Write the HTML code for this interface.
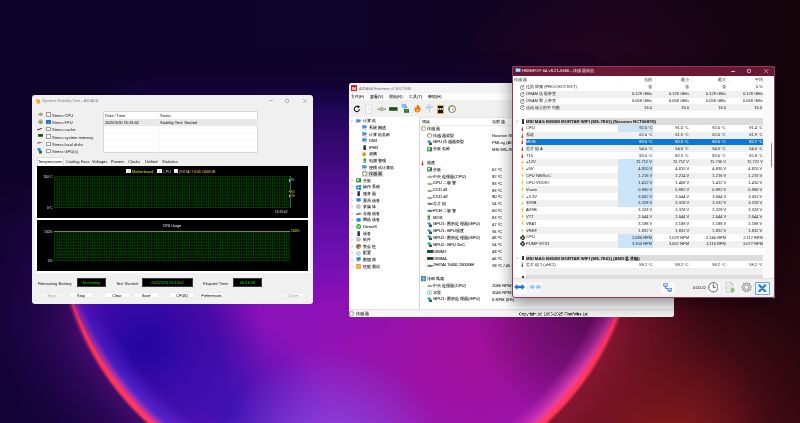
<!DOCTYPE html>
<html><head><meta charset="utf-8"><style>
*{box-sizing:border-box;margin:0;padding:0}
html,body{width:800px;height:423px;overflow:hidden;background:#0c0326}
body{position:relative;font-family:"Liberation Sans",sans-serif;color:#222}
.abs{position:absolute}
.t{position:absolute;white-space:nowrap;line-height:1;transform:scale(.25);-webkit-text-stroke-width:0.3px}
.tc{position:absolute;width:0;height:0}
.tb{position:absolute;left:0;top:0;white-space:nowrap;text-align:center;transform:scale(.25);transform-origin:0 0;-webkit-text-stroke-width:0.3px}
#bg{position:absolute;left:0;top:0}
.win{position:absolute;background:#f0f0f0;border-radius:3px;overflow:hidden;will-change:transform}
.grid{background-color:#000;background-image:repeating-linear-gradient(90deg,rgba(0,78,0,.62) 0 0.85px,transparent 0.85px 2.36px),repeating-linear-gradient(180deg,rgba(0,78,0,.62) 0 0.9px,transparent 0.9px 3.08px)}
.cb{position:absolute;width:4.4px;height:4.4px;background:#fff;border-radius:0.5px}
.gbox{position:absolute;background:#000;border:0.5px solid #3a3a3a}
.btn{position:absolute;height:6.7px;background:#fdfdfd;border:0.4px solid #ebebeb;border-radius:0.8px}
#w1 .t,#w1 .tb{-webkit-text-stroke-width:0.1px}
#w3 .t{-webkit-text-stroke-width:0.12px}
</style></head><body>
<svg id="bg" width="800" height="423" viewBox="0 0 800 423">
<defs>
 <linearGradient id="base" x1="0" y1="0" x2="800" y2="0" gradientUnits="userSpaceOnUse">
  <stop offset="0" stop-color="#0d0328"/>
  <stop offset="0.45" stop-color="#0e0328"/>
  <stop offset="0.72" stop-color="#10031c"/>
  <stop offset="1" stop-color="#16040a"/>
 </linearGradient>
 <radialGradient id="topred" cx="600" cy="100" r="150" gradientUnits="userSpaceOnUse">
  <stop offset="0" stop-color="#380622" stop-opacity="0.6"/>
  <stop offset="1" stop-color="#380622" stop-opacity="0"/>
 </radialGradient>
 <radialGradient id="redglow" cx="630" cy="470" r="320" gradientUnits="userSpaceOnUse">
  <stop offset="0" stop-color="#7a1820" stop-opacity="1"/>
  <stop offset="0.45" stop-color="#500c16" stop-opacity="0.8"/>
  <stop offset="1" stop-color="#20050c" stop-opacity="0"/>
 </radialGradient>
 <radialGradient id="outglowL" cx="347" cy="207" r="480" gradientUnits="userSpaceOnUse">
  <stop offset="0.6" stop-color="#4a0c72" stop-opacity="1"/>
  <stop offset="0.66" stop-color="#2e085c" stop-opacity="0.9"/>
  <stop offset="0.78" stop-color="#1a0446" stop-opacity="0.55"/>
  <stop offset="1" stop-color="#120336" stop-opacity="0"/>
 </radialGradient>
 <radialGradient id="outglowR" cx="347" cy="207" r="400" gradientUnits="userSpaceOnUse">
  <stop offset="0.73" stop-color="#901838" stop-opacity="0.85"/>
  <stop offset="0.85" stop-color="#701226" stop-opacity="0.5"/>
  <stop offset="1" stop-color="#400810" stop-opacity="0"/>
 </radialGradient>
 <linearGradient id="vfade" x1="0" y1="0" x2="0" y2="423" gradientUnits="userSpaceOnUse">
  <stop offset="0.62" stop-color="#fff" stop-opacity="0"/>
  <stop offset="0.9" stop-color="#fff" stop-opacity="1"/>
 </linearGradient>
 <linearGradient id="hL" x1="0" y1="0" x2="800" y2="0" gradientUnits="userSpaceOnUse">
  <stop offset="0.3" stop-color="#fff" stop-opacity="1"/>
  <stop offset="0.5" stop-color="#fff" stop-opacity="0"/>
 </linearGradient>
 <linearGradient id="hR" x1="0" y1="0" x2="800" y2="0" gradientUnits="userSpaceOnUse">
  <stop offset="0.5" stop-color="#fff" stop-opacity="0"/>
  <stop offset="0.7" stop-color="#fff" stop-opacity="1"/>
 </linearGradient>
 <linearGradient id="vfade2" x1="0" y1="0" x2="0" y2="423" gradientUnits="userSpaceOnUse">
  <stop offset="0.4" stop-color="#fff" stop-opacity="0"/>
  <stop offset="0.8" stop-color="#fff" stop-opacity="1"/>
 </linearGradient>
 <linearGradient id="vfade3" x1="0" y1="0" x2="0" y2="423" gradientUnits="userSpaceOnUse">
  <stop offset="0.12" stop-color="#fff" stop-opacity="0"/>
  <stop offset="0.26" stop-color="#fff" stop-opacity="1"/>
 </linearGradient>
 <mask id="vmask3"><rect width="800" height="423" fill="url(#vfade3)"/></mask>
 <mask id="vmask2"><rect width="800" height="423" fill="url(#vfade2)"/></mask>
 <mask id="vmask"><rect width="800" height="423" fill="url(#vfade)"/></mask>
 <mask id="mL"><rect width="800" height="423" fill="url(#hL)"/></mask>
 <mask id="mR"><rect width="800" height="423" fill="url(#hR)"/></mask>
 <linearGradient id="inner" x1="0" y1="0" x2="0" y2="423" gradientUnits="userSpaceOnUse">
  <stop offset="0" stop-color="#0d0328"/>
  <stop offset="0.17" stop-color="#0f0332"/>
  <stop offset="0.24" stop-color="#1a0652"/>
  <stop offset="0.36" stop-color="#3a0875"/>
  <stop offset="0.48" stop-color="#560a9c"/>
  <stop offset="0.6" stop-color="#6e10b0"/>
  <stop offset="0.72" stop-color="#8a10b8"/>
  <stop offset="1" stop-color="#9218b8"/>
 </linearGradient>
 <radialGradient id="innerblue" cx="145" cy="345" r="120" gradientUnits="userSpaceOnUse">
  <stop offset="0" stop-color="#2006a0" stop-opacity="1"/>
  <stop offset="0.6" stop-color="#2a08a0" stop-opacity="0.7"/>
  <stop offset="1" stop-color="#2a08a0" stop-opacity="0"/>
 </radialGradient>
 <radialGradient id="innerblue2" cx="235" cy="415" r="95" gradientUnits="userSpaceOnUse">
  <stop offset="0" stop-color="#3010b0" stop-opacity="0.9"/>
  <stop offset="1" stop-color="#3010b0" stop-opacity="0"/>
 </radialGradient>
 <radialGradient id="innermag" cx="480" cy="350" r="170" gradientUnits="userSpaceOnUse">
  <stop offset="0" stop-color="#a4109a" stop-opacity="1"/>
  <stop offset="1" stop-color="#a4109a" stop-opacity="0"/>
 </radialGradient>
 <radialGradient id="innerlav" cx="330" cy="470" r="120" gradientUnits="userSpaceOnUse">
  <stop offset="0" stop-color="#8450e8" stop-opacity="1"/>
  <stop offset="1" stop-color="#8450e8" stop-opacity="0"/>
 </radialGradient>
 <radialGradient id="rimband" cx="347" cy="207" r="320" gradientUnits="userSpaceOnUse">
  <stop offset="0.88" stop-color="#ff3a90" stop-opacity="0"/>
  <stop offset="0.908" stop-color="#ff3a70" stop-opacity="0.9"/>
  <stop offset="0.915" stop-color="#ff3a60" stop-opacity="0.9"/>
  <stop offset="0.925" stop-color="#ff3a60" stop-opacity="0"/>
 </radialGradient>
 <radialGradient id="rimbandB" cx="347" cy="207" r="320" gradientUnits="userSpaceOnUse">
  <stop offset="0.82" stop-color="#6a30f0" stop-opacity="0"/>
  <stop offset="0.89" stop-color="#6a3ef0" stop-opacity="0.55"/>
  <stop offset="0.905" stop-color="#c040c0" stop-opacity="0.55"/>
  <stop offset="0.915" stop-color="#c040c0" stop-opacity="0"/>
 </radialGradient>
 <radialGradient id="rimbandP" cx="347" cy="207" r="320" gradientUnits="userSpaceOnUse">
  <stop offset="0.84" stop-color="#e040c0" stop-opacity="0"/>
  <stop offset="0.895" stop-color="#e848b8" stop-opacity="0.85"/>
  <stop offset="0.912" stop-color="#ff4090" stop-opacity="0.8"/>
  <stop offset="0.92" stop-color="#ff4090" stop-opacity="0"/>
 </radialGradient>
 <radialGradient id="darkmag" cx="590" cy="315" r="115" gradientUnits="userSpaceOnUse">
  <stop offset="0" stop-color="#4a0838" stop-opacity="0.75"/>
  <stop offset="0.55" stop-color="#4a0838" stop-opacity="0.4"/>
  <stop offset="1" stop-color="#4a0838" stop-opacity="0"/>
 </radialGradient>
 <radialGradient id="redglow2" cx="650" cy="440" r="120" gradientUnits="userSpaceOnUse">
  <stop offset="0" stop-color="#a02020" stop-opacity="0.7"/>
  <stop offset="1" stop-color="#a02020" stop-opacity="0"/>
 </radialGradient>
 <radialGradient id="tlfix" cx="60" cy="70" r="95" gradientUnits="userSpaceOnUse">
  <stop offset="0.45" stop-color="#0d0328" stop-opacity="1"/>
  <stop offset="1" stop-color="#0d0328" stop-opacity="0"/>
 </radialGradient>
 <clipPath id="cc"><circle cx="347" cy="207" r="292"/></clipPath>
 <linearGradient id="rimfade" x1="0" y1="0" x2="0" y2="423" gradientUnits="userSpaceOnUse">
  <stop offset="0.64" stop-color="#ff3058" stop-opacity="0"/>
  <stop offset="0.8" stop-color="#ff3058" stop-opacity="1"/>
  <stop offset="1" stop-color="#ff3a5a" stop-opacity="1"/>
 </linearGradient>
</defs>
<rect width="800" height="423" fill="url(#base)"/>
<rect width="800" height="423" fill="url(#topred)"/>
<rect width="800" height="423" fill="url(#redglow)"/>
<rect width="800" height="423" fill="url(#redglow2)"/>
<g mask="url(#vmask2)">
 <rect width="800" height="423" fill="url(#outglowL)" mask="url(#mL)"/>
 <rect width="800" height="423" fill="url(#outglowR)" mask="url(#mR)"/>
</g>
<g clip-path="url(#cc)" mask="url(#vmask3)">
 <rect width="800" height="423" fill="url(#inner)"/>
 <rect width="800" height="423" fill="url(#innerblue)"/>
 <rect width="800" height="423" fill="url(#innerblue2)"/>
 <rect width="800" height="423" fill="url(#innermag)"/>
 <rect width="800" height="423" fill="url(#innerlav)"/>
 <rect width="800" height="423" fill="url(#darkmag)"/>
 <rect x="0" y="0" width="250" height="200" fill="url(#tlfix)"/>
 <g mask="url(#vmask)"><rect width="800" height="423" fill="url(#rimbandB)" mask="url(#mL)"/><rect width="800" height="423" fill="url(#rimbandP)" mask="url(#mR)"/></g>
</g>
<rect width="800" height="423" fill="url(#rimband)" mask="url(#vmask)"/>
<circle cx="347" cy="207" r="291" fill="none" stroke="url(#rimfade)" stroke-width="3"/>
</svg>
<div class="win" id="w1" style="left:32px;top:95px;width:281px;height:209px;background:#f0f0f0">
<svg class="abs" style="left:3.5px;top:3px" width="5" height="6" viewBox="0 0 5 6"><path d="M0.6 0.3 L1.6 2 L2.4 1 Q4.6 2.6 4.2 4.4 Q3.6 5.8 2.2 5.8 Q0.4 5.6 0.5 3.8 Z" fill="#f39a1e"/><path d="M1.4 3.6 Q2.6 3 3.4 4.2 Q3.2 5.3 2.2 5.3 Q1.2 5.2 1.4 3.6Z" fill="#ffd24a"/></svg>
<div class="t" style="top:4.27px;font-size:16.60px;color:#8c8c8c;left:10.00px;transform-origin:0 0;">System Stability Test - AIDA64</div>
<div class="abs" style="left:237.40px;top:5.30px;width:4.00px;height:0.50px;background:#b4b4b4;"></div>
<div class="abs" style="left:253.4px;top:3.5px;width:4px;height:4px;border:0.6px solid #a8a8a8;border-radius:1.3px"></div>
<svg class="abs" style="left:270.5px;top:3.5px" width="4.2" height="4.2" viewBox="0 0 4 4"><path d="M0 0L4 4M4 0L0 4" stroke="#909090" stroke-width="0.55"/></svg>
<svg class="abs" style="left:5.6px;top:17.20px" width="5.5" height="4" viewBox="0 0 11 8"><path d="M0 4 L5.5 1 L11 4 L5.5 7Z" fill="#9aaa80"/><path d="M0 4 L5.5 7 L11 4 L11 5 L5.5 8 L0 5Z" fill="#5d7a3a"/></svg>
<div class="abs" style="left:14.4px;top:17.45px;width:4.5px;height:4.5px;background:#fcfcfc;border:0.5px solid #9a9a9a;border-radius:0.6px"></div>
<div class="t" style="top:17.72px;font-size:16.20px;color:#303030;left:20.30px;transform-origin:0 0;">Stress CPU</div>
<svg class="abs" style="left:5.6px;top:24.40px" width="5.5" height="5" viewBox="0 0 11 10"><path d="M0 3 L5.5 0 L11 3 L5.5 6Z" fill="#b8c0a8"/><path d="M0 6 L5.5 3 L11 6 L5.5 9Z" fill="#8aa070"/><path d="M0 6 L5.5 9 L11 6 L11 7 L5.5 10 L0 7Z" fill="#506a30"/></svg>
<div class="abs" style="left:14.4px;top:24.65px;width:4.5px;height:4.5px;background:#1a6fd0;border-radius:0.6px"></div>
<svg class="abs" style="left:15.2px;top:25.50px" width="3" height="3" viewBox="0 0 6 6"><path d="M0.8 3 L2.4 4.6 L5.2 1.2" stroke="#fff" stroke-width="0.9" fill="none"/></svg>
<div class="t" style="top:24.92px;font-size:16.20px;color:#303030;left:20.30px;transform-origin:0 0;">Stress FPU</div>
<svg class="abs" style="left:5.4px;top:31.70px" width="5.5" height="4" viewBox="0 0 11 8"><path d="M0 5 L8 2 L11 3 L3 6Z" fill="#333"/><path d="M0 5 L3 6 L3 7 L0 6Z" fill="#111"/></svg>
<div class="abs" style="left:14.4px;top:31.95px;width:4.5px;height:4.5px;background:#fcfcfc;border:0.5px solid #9a9a9a;border-radius:0.6px"></div>
<div class="t" style="top:32.22px;font-size:16.20px;color:#303030;left:20.30px;transform-origin:0 0;">Stress cache</div>
<svg class="abs" style="left:5.6px;top:39.10px" width="5.5" height="3.4" viewBox="0 0 11 7"><rect x="0" y="0" width="11" height="6" fill="#2e6a2e"/><rect x="1" y="1" width="9" height="3" fill="#1a4a1a"/><rect x="0" y="6" width="11" height="1" fill="#c8a030"/></svg>
<div class="abs" style="left:14.4px;top:39.35px;width:4.5px;height:4.5px;background:#fcfcfc;border:0.5px solid #9a9a9a;border-radius:0.6px"></div>
<div class="t" style="top:39.62px;font-size:16.20px;color:#303030;left:20.30px;transform-origin:0 0;">Stress system memory</div>
<svg class="abs" style="left:5.4px;top:46.30px" width="5.5" height="3" viewBox="0 0 11 6"><path d="M0 3 L9 2 L11 3 L2 5Z" fill="#555"/><rect x="1" y="4" width="3" height="1" fill="#888"/></svg>
<div class="abs" style="left:14.4px;top:46.55px;width:4.5px;height:4.5px;background:#fcfcfc;border:0.5px solid #9a9a9a;border-radius:0.6px"></div>
<div class="t" style="top:46.82px;font-size:16.20px;color:#303030;left:20.30px;transform-origin:0 0;">Stress local disks</div>
<svg class="abs" style="left:5.4px;top:53.40px" width="5" height="5.5" viewBox="0 0 10 11"><path d="M0 1 L6 0 L9 5 L3 7Z" fill="#2a8ae0"/><rect x="4" y="6" width="6" height="5" fill="#2e6a2e"/></svg>
<div class="abs" style="left:14.4px;top:53.65px;width:4.5px;height:4.5px;background:#fcfcfc;border:0.5px solid #9a9a9a;border-radius:0.6px"></div>
<div class="t" style="top:53.92px;font-size:16.20px;color:#303030;left:20.30px;transform-origin:0 0;">Stress GPU(s)</div>
<div class="abs" style="left:71.40px;top:16.40px;width:155.00px;height:42.00px;background:#fff;border:0.6px solid #d6d6d6"></div>
<div class="abs" style="left:72.20px;top:24.40px;width:153.40px;height:6.60px;background:#e8e8e8;"></div>
<div class="abs" style="left:126.40px;top:17.20px;width:0.50px;height:40.40px;background:#f2f2f2;"></div>
<div class="abs" style="left:72.20px;top:37.60px;width:153.40px;height:0.50px;background:#f7f7f7;"></div>
<div class="abs" style="left:72.20px;top:44.40px;width:153.40px;height:0.50px;background:#f7f7f7;"></div>
<div class="abs" style="left:72.20px;top:51.00px;width:153.40px;height:0.50px;background:#f7f7f7;"></div>
<div class="t" style="top:18.66px;font-size:15.80px;color:#333;left:73.00px;transform-origin:0 0;">Date / Time</div>
<div class="t" style="top:18.66px;font-size:15.80px;color:#333;left:127.60px;transform-origin:0 0;">Status</div>
<div class="t" style="top:26.06px;font-size:15.80px;color:#222;left:73.00px;transform-origin:0 0;">2025/3/20 15:33:02</div>
<div class="t" style="top:26.06px;font-size:15.80px;color:#222;left:127.60px;transform-origin:0 0;">Stability Test: Started</div>
<div class="abs" style="left:4.60px;top:62.40px;width:27.40px;height:8.40px;background:#fff;border:0.5px solid #dcdcdc;border-bottom:none"></div>
<div class="t" style="top:64.94px;font-size:16.00px;color:#262626;left:5.75px;transform-origin:0 0;">Temperatures</div>
<div class="t" style="top:64.94px;font-size:16.00px;color:#262626;left:33.60px;transform-origin:0 0;">Cooling Fans</div>
<div class="t" style="top:64.94px;font-size:16.00px;color:#262626;left:60.10px;transform-origin:0 0;">Voltages</div>
<div class="t" style="top:64.94px;font-size:16.00px;color:#262626;left:79.00px;transform-origin:0 0;">Powers</div>
<div class="t" style="top:64.94px;font-size:16.00px;color:#262626;left:96.00px;transform-origin:0 0;">Clocks</div>
<div class="t" style="top:64.94px;font-size:16.00px;color:#262626;left:113.00px;transform-origin:0 0;">Unified</div>
<div class="t" style="top:64.94px;font-size:16.00px;color:#262626;left:130.00px;transform-origin:0 0;">Statistics</div>
<div class="abs" style="left:3.40px;top:70.60px;width:274.40px;height:107.40px;background:#fff;"></div>
<div class="abs" style="left:4.9px;top:71px;width:271px;height:52px;background:#000">
<svg class="abs" style="left:17.6px;top:10.3px" width="235.7" height="32" viewBox="0 0 235.7 32"><path d="M0.50 0V32.00 M2.87 0V32.00 M5.24 0V32.00 M7.61 0V32.00 M9.98 0V32.00 M12.35 0V32.00 M14.72 0V32.00 M17.09 0V32.00 M19.46 0V32.00 M21.83 0V32.00 M24.20 0V32.00 M26.57 0V32.00 M28.94 0V32.00 M31.31 0V32.00 M33.68 0V32.00 M36.05 0V32.00 M38.42 0V32.00 M40.79 0V32.00 M43.16 0V32.00 M45.53 0V32.00 M47.90 0V32.00 M50.27 0V32.00 M52.64 0V32.00 M55.01 0V32.00 M57.38 0V32.00 M59.75 0V32.00 M62.12 0V32.00 M64.49 0V32.00 M66.86 0V32.00 M69.23 0V32.00 M71.60 0V32.00 M73.97 0V32.00 M76.34 0V32.00 M78.71 0V32.00 M81.08 0V32.00 M83.45 0V32.00 M85.82 0V32.00 M88.19 0V32.00 M90.56 0V32.00 M92.93 0V32.00 M95.30 0V32.00 M97.67 0V32.00 M100.04 0V32.00 M102.41 0V32.00 M104.78 0V32.00 M107.15 0V32.00 M109.52 0V32.00 M111.89 0V32.00 M114.26 0V32.00 M116.63 0V32.00 M119.00 0V32.00 M121.37 0V32.00 M123.74 0V32.00 M126.11 0V32.00 M128.48 0V32.00 M130.85 0V32.00 M133.22 0V32.00 M135.59 0V32.00 M137.96 0V32.00 M140.33 0V32.00 M142.70 0V32.00 M145.07 0V32.00 M147.44 0V32.00 M149.81 0V32.00 M152.18 0V32.00 M154.55 0V32.00 M156.92 0V32.00 M159.29 0V32.00 M161.66 0V32.00 M164.03 0V32.00 M166.40 0V32.00 M168.77 0V32.00 M171.14 0V32.00 M173.51 0V32.00 M175.88 0V32.00 M178.25 0V32.00 M180.62 0V32.00 M182.99 0V32.00 M185.36 0V32.00 M187.73 0V32.00 M190.10 0V32.00 M192.47 0V32.00 M194.84 0V32.00 M197.21 0V32.00 M199.58 0V32.00 M201.95 0V32.00 M204.32 0V32.00 M206.69 0V32.00 M209.06 0V32.00 M211.43 0V32.00 M213.80 0V32.00 M216.17 0V32.00 M218.54 0V32.00 M220.91 0V32.00 M223.28 0V32.00 M225.65 0V32.00 M228.02 0V32.00 M230.39 0V32.00 M232.76 0V32.00 M235.13 0V32.00 M0 31.50H235.70 M0 28.42H235.70 M0 25.34H235.70 M0 22.26H235.70 M0 19.18H235.70 M0 16.10H235.70 M0 13.02H235.70 M0 9.94H235.70 M0 6.86H235.70 M0 3.78H235.70 M0 0.70H235.70" stroke="#004200" stroke-width="0.85" fill="none"/></svg>
<div class="cb" style="left:89.6px;top:3px"></div>
<svg class="abs" style="left:90.3px;top:3.8px" width="3" height="3" viewBox="0 0 6 6"><path d="M0.8 3 L2.4 4.6 L5.2 1.2" stroke="#444" stroke-width="0.9" fill="none"/></svg>
<div class="t" style="top:3.56px;font-size:15.00px;color:#d4d40c;left:95.10px;transform-origin:0 0;">Motherboard</div>
<div class="cb" style="left:120.6px;top:3px"></div>
<svg class="abs" style="left:121.3px;top:3.8px" width="3" height="3" viewBox="0 0 6 6"><path d="M0.8 3 L2.4 4.6 L5.2 1.2" stroke="#444" stroke-width="0.9" fill="none"/></svg>
<div class="t" style="top:3.56px;font-size:15.00px;color:#9cb6dc;left:126.10px;transform-origin:0 0;">CPU</div>
<div class="cb" style="left:137.1px;top:3px"></div>
<svg class="abs" style="left:137.79999999999998px;top:3.8px" width="3" height="3" viewBox="0 0 6 6"><path d="M0.8 3 L2.4 4.6 L5.2 1.2" stroke="#444" stroke-width="0.9" fill="none"/></svg>
<div class="t" style="top:3.56px;font-size:15.00px;color:#d8a860;left:142.10px;transform-origin:0 0;">ZHITAI Ti600 2000GB</div>
<div class="t" style="top:9.33px;font-size:13.60px;color:#d0d0d0;right:255.40px;transform-origin:100% 0;">100°C</div>
<div class="t" style="top:40.33px;font-size:13.60px;color:#d0d0d0;right:255.40px;transform-origin:100% 0;">0°C</div>
<div class="t" style="top:11.93px;font-size:12.80px;color:#9cb6dc;left:254.30px;transform-origin:0 0;">92</div>
<div class="t" style="top:23.93px;font-size:12.80px;color:#d4d40c;left:254.30px;transform-origin:0 0;">53</div>
<div class="t" style="top:28.43px;font-size:12.80px;color:#d8a860;left:254.30px;transform-origin:0 0;">39</div>
<div class="abs" style="left:252.70px;top:10.30px;width:0.60px;height:32.00px;background:#4a5a4a;"></div>
<div class="abs" style="left:252.40px;top:13.20px;width:0.70px;height:3.00px;background:#9cb6dc;"></div>
<div class="abs" style="left:252.40px;top:24.60px;width:0.70px;height:1.60px;background:#d4d40c;"></div>
<div class="abs" style="left:252.40px;top:29.20px;width:0.70px;height:1.40px;background:#d8a860;"></div>
<div class="t" style="top:44.43px;font-size:12.80px;color:#d0d0d0;left:238.10px;transform-origin:0 0;">15:33:02</div>
</div>
<div class="abs" style="left:4.8px;top:125.4px;width:271.7px;height:50.3px;background:#000">
<svg class="abs" style="left:17.6px;top:10.5px" width="236" height="30.2" viewBox="0 0 236 30.2"><path d="M0.50 0V30.20 M2.87 0V30.20 M5.24 0V30.20 M7.61 0V30.20 M9.98 0V30.20 M12.35 0V30.20 M14.72 0V30.20 M17.09 0V30.20 M19.46 0V30.20 M21.83 0V30.20 M24.20 0V30.20 M26.57 0V30.20 M28.94 0V30.20 M31.31 0V30.20 M33.68 0V30.20 M36.05 0V30.20 M38.42 0V30.20 M40.79 0V30.20 M43.16 0V30.20 M45.53 0V30.20 M47.90 0V30.20 M50.27 0V30.20 M52.64 0V30.20 M55.01 0V30.20 M57.38 0V30.20 M59.75 0V30.20 M62.12 0V30.20 M64.49 0V30.20 M66.86 0V30.20 M69.23 0V30.20 M71.60 0V30.20 M73.97 0V30.20 M76.34 0V30.20 M78.71 0V30.20 M81.08 0V30.20 M83.45 0V30.20 M85.82 0V30.20 M88.19 0V30.20 M90.56 0V30.20 M92.93 0V30.20 M95.30 0V30.20 M97.67 0V30.20 M100.04 0V30.20 M102.41 0V30.20 M104.78 0V30.20 M107.15 0V30.20 M109.52 0V30.20 M111.89 0V30.20 M114.26 0V30.20 M116.63 0V30.20 M119.00 0V30.20 M121.37 0V30.20 M123.74 0V30.20 M126.11 0V30.20 M128.48 0V30.20 M130.85 0V30.20 M133.22 0V30.20 M135.59 0V30.20 M137.96 0V30.20 M140.33 0V30.20 M142.70 0V30.20 M145.07 0V30.20 M147.44 0V30.20 M149.81 0V30.20 M152.18 0V30.20 M154.55 0V30.20 M156.92 0V30.20 M159.29 0V30.20 M161.66 0V30.20 M164.03 0V30.20 M166.40 0V30.20 M168.77 0V30.20 M171.14 0V30.20 M173.51 0V30.20 M175.88 0V30.20 M178.25 0V30.20 M180.62 0V30.20 M182.99 0V30.20 M185.36 0V30.20 M187.73 0V30.20 M190.10 0V30.20 M192.47 0V30.20 M194.84 0V30.20 M197.21 0V30.20 M199.58 0V30.20 M201.95 0V30.20 M204.32 0V30.20 M206.69 0V30.20 M209.06 0V30.20 M211.43 0V30.20 M213.80 0V30.20 M216.17 0V30.20 M218.54 0V30.20 M220.91 0V30.20 M223.28 0V30.20 M225.65 0V30.20 M228.02 0V30.20 M230.39 0V30.20 M232.76 0V30.20 M235.13 0V30.20 M0 29.70H236.00 M0 26.62H236.00 M0 23.54H236.00 M0 20.46H236.00 M0 17.38H236.00 M0 14.30H236.00 M0 11.22H236.00 M0 8.14H236.00 M0 5.06H236.00 M0 1.98H236.00" stroke="#004200" stroke-width="0.85" fill="none"/></svg>
<div class="abs" style="left:17.60px;top:10.30px;width:236.00px;height:0.70px;background:#8c8c14;"></div>
<div class="t" style="top:3.51px;font-size:13.80px;color:#e0e0e0;left:126.00px;transform-origin:0 0;">CPU Usage</div>
<div class="t" style="top:9.43px;font-size:13.60px;color:#d0d0d0;right:256.00px;transform-origin:100% 0;">100%</div>
<div class="t" style="top:38.93px;font-size:13.60px;color:#d0d0d0;right:256.00px;transform-origin:100% 0;">0%</div>
<div class="t" style="top:8.98px;font-size:13.20px;color:#d4d40c;left:254.40px;transform-origin:0 0;">100%</div>
</div>
<div class="t" style="top:185.52px;font-size:16.20px;color:#333;left:6.00px;transform-origin:0 0;">Remaining Battery:</div>
<div class="t" style="top:185.52px;font-size:16.20px;color:#333;left:83.90px;transform-origin:0 0;">Test Started:</div>
<div class="t" style="top:185.52px;font-size:16.20px;color:#333;left:171.00px;transform-origin:0 0;">Elapsed Time:</div>
<div class="gbox" style="left:45px;top:182.6px;width:28.8px;height:9.1px"></div>
<div class="abs" style="left:45.00px;top:182.60px;width:28.80px;height:9.10px;"><div class="tb" style="width:115.20px;height:36.40px;line-height:36.40px;font-size:15.20px;color:#22c822;">No battery</div></div>
<div class="gbox" style="left:110.3px;top:182.6px;width:50.9px;height:9.1px"></div>
<div class="abs" style="left:110.30px;top:182.60px;width:50.90px;height:9.10px;"><div class="tb" style="width:203.60px;height:36.40px;line-height:36.40px;font-size:15.20px;color:#22c822;">2025/3/20 15:33:02</div></div>
<div class="gbox" style="left:200.7px;top:182.6px;width:29.3px;height:9.1px"></div>
<div class="abs" style="left:200.70px;top:182.60px;width:29.30px;height:9.10px;"><div class="tb" style="width:117.20px;height:36.40px;line-height:36.40px;font-size:15.20px;color:#22c822;">00:16:38</div></div>
<div class="btn" style="left:7px;top:196.5px;width:25px;background:#f6f6f6;border-color:#ececec"></div>
<div class="abs" style="left:7.00px;top:196.50px;width:25.00px;height:6.70px;"><div class="tb" style="width:100.00px;height:26.80px;line-height:26.80px;font-size:15.20px;color:#a8a8a8;">Start</div></div>
<div class="btn" style="left:36px;top:196.5px;width:26px;"></div>
<div class="abs" style="left:36.00px;top:196.50px;width:26.00px;height:6.70px;"><div class="tb" style="width:104.00px;height:26.80px;line-height:26.80px;font-size:15.20px;color:#222;">Stop</div></div>
<div class="btn" style="left:71.8px;top:196.5px;width:25.8px;"></div>
<div class="abs" style="left:71.80px;top:196.50px;width:25.80px;height:6.70px;"><div class="tb" style="width:103.20px;height:26.80px;line-height:26.80px;font-size:15.20px;color:#222;">Clear</div></div>
<div class="btn" style="left:101px;top:196.5px;width:26px;"></div>
<div class="abs" style="left:101.00px;top:196.50px;width:26.00px;height:6.70px;"><div class="tb" style="width:104.00px;height:26.80px;line-height:26.80px;font-size:15.20px;color:#222;">Save</div></div>
<div class="btn" style="left:136.8px;top:196.5px;width:26.4px;"></div>
<div class="abs" style="left:136.80px;top:196.50px;width:26.40px;height:6.70px;"><div class="tb" style="width:105.60px;height:26.80px;line-height:26.80px;font-size:15.20px;color:#222;">CPUID</div></div>
<div class="btn" style="left:167px;top:196.5px;width:25px;"></div>
<div class="abs" style="left:167.00px;top:196.50px;width:25.00px;height:6.70px;"><div class="tb" style="width:100.00px;height:26.80px;line-height:26.80px;font-size:15.20px;color:#222;">Preferences</div></div>
<div class="btn" style="left:248.2px;top:196.5px;width:25.7px;background:#f6f6f6;border-color:#ececec"></div>
<div class="abs" style="left:248.20px;top:196.50px;width:25.70px;height:6.70px;"><div class="tb" style="width:102.80px;height:26.80px;line-height:26.80px;font-size:15.20px;color:#a8a8a8;">Close</div></div>
</div>
<div class="win" id="w2" style="left:349px;top:82.5px;width:325px;height:234px;background:#f0f0f0;border-radius:3px">
<div class="abs" style="left:0.00px;top:0.00px;width:325.00px;height:10.00px;background:#f3f3f3;"></div>
<div class="abs" style="left:2px;top:2.4px;width:6px;height:6px;background:#c8202a;border-radius:0.6px"></div>
<div class="t" style="top:3.74px;font-size:14.40px;color:#fff;left:2.60px;transform-origin:0 0;font-weight:bold;">64</div>
<div class="t" style="top:3.09px;font-size:16.40px;color:#8a8a8a;left:10.00px;transform-origin:0 0;">AIDA64 Extreme v7.60.7300</div>
<div class="abs" style="left:0.00px;top:9.80px;width:325.00px;height:7.60px;background:#fcfcfc;"></div>
<div class="t" style="top:12.14px;font-size:16.00px;color:#333;left:2.00px;transform-origin:0 0;">文件(F)</div>
<div class="t" style="top:12.14px;font-size:16.00px;color:#333;left:21.00px;transform-origin:0 0;">查看(V)</div>
<div class="t" style="top:12.14px;font-size:16.00px;color:#333;left:40.00px;transform-origin:0 0;">报告(R)</div>
<div class="t" style="top:12.14px;font-size:16.00px;color:#333;left:60.00px;transform-origin:0 0;">工具(T)</div>
<div class="t" style="top:12.14px;font-size:16.00px;color:#333;left:78.70px;transform-origin:0 0;">帮助(H)</div>
<div class="abs" style="left:0.00px;top:17.40px;width:325.00px;height:16.80px;background:#f0f0f0;"></div>
<svg class="abs" style="left:4.4px;top:22px" width="8" height="8" viewBox="0 0 16 16"><path d="M13 8.5 A5.2 5.2 0 1 1 10.6 3.6" stroke="#1a1a1a" stroke-width="2.2" fill="none"/><path d="M8.6 0.6 L14.2 3 L9.8 7.2Z" fill="#1a1a1a"/></svg>
<svg class="abs" style="left:16px;top:21px" width="7.5" height="9.5" viewBox="0 0 15 19"><path d="M1 0.5 H10 L14 4.5 V18.5 H1Z" fill="#f6f6f6" stroke="#c4c4c4" stroke-width="0.9"/><circle cx="7.5" cy="10" r="1.6" fill="#ddd"/></svg>
<svg class="abs" style="left:27.5px;top:23.4px" width="9.5" height="5.2" viewBox="0 0 19 10"><path d="M0.5 5 L9.5 1 L18.5 5 L9.5 9Z" fill="#c8ccb8"/><path d="M0.5 5 L9.5 9 L18.5 5 L18.5 6.4 L9.5 10 L0.5 6.4Z" fill="#6a7a4a"/><path d="M5 5 L9.5 3 L14 5 L9.5 7Z" fill="#a0a890"/></svg>
<svg class="abs" style="left:40px;top:24px" width="8.6" height="4.2" viewBox="0 0 17 8"><rect width="17" height="8" fill="#3a6e3a"/><rect x="1.5" y="1.5" width="14" height="4" fill="#1e4a1e"/><rect x="0" y="7" width="17" height="1" fill="#a89040"/></svg>
<svg class="abs" style="left:52px;top:21.4px" width="8" height="9" viewBox="0 0 16 18"><path d="M0.5 1.5 L9 0.5 L13 7.5 L4.5 9Z" fill="#2a8ae0"/><path d="M2 2.4 L8.4 1.6 L11.2 6.8 L4.8 7.8Z" fill="#8ac8f8"/><rect x="6" y="10" width="10" height="7.5" fill="#2e6a2e"/><rect x="7.5" y="11.5" width="7" height="3" fill="#4a9a4a"/></svg>
<svg class="abs" style="left:65px;top:21px" width="7" height="8.6" viewBox="0 0 14 17"><path d="M1.5 5 L4 8.5 L6.5 1 Q13.5 6 13 11.5 Q12 16.8 7 16.8 Q1 16.8 1 11Z" fill="#f5701a"/><path d="M4 11.5 Q6.5 8.5 9.5 11.5 Q9.5 15.5 6.8 15.5 Q4 15.5 4 11.5Z" fill="#ffc83a"/></svg>
<svg class="abs" style="left:76px;top:21.4px" width="9" height="9" viewBox="0 0 18 18"><path d="M1.5 8 L16.5 5.5" stroke="#9ab8d0" stroke-width="2.2"/><path d="M8 6.5 L9.5 17.5" stroke="#b8cce0" stroke-width="2"/><circle cx="7.5" cy="4" r="3.2" fill="#dde8f0" stroke="#9ab0c4" stroke-width="0.8"/></svg>
<div class="abs" style="left:87.5px;top:21.5px;width:7.6px;height:9px;background:#151515;border:0.8px solid #d8b040;border-radius:0.4px"></div>
<svg class="abs" style="left:88.8px;top:24.6px" width="5" height="2.6" viewBox="0 0 10 5"><rect x="0" y="0" width="2.6" height="5" fill="#e8e8e8"/><rect x="3.7" y="0" width="2.6" height="5" fill="#e8e8e8"/><rect x="7.4" y="0" width="2.6" height="5" fill="#e8e8e8"/></svg>
<svg class="abs" style="left:99.4px;top:22px" width="8" height="8" viewBox="0 0 16 16"><circle cx="8" cy="8" r="7" fill="#fff" stroke="#3a3a3a" stroke-width="1.3"/><path d="M3 10.5 A5.4 5.4 0 0 1 5.6 3.2" stroke="#3aa83a" stroke-width="2" fill="none"/><path d="M5.6 3.2 A5.4 5.4 0 0 1 13 7" stroke="#f0a020" stroke-width="2" fill="none"/><path d="M8 8 L11 11" stroke="#333" stroke-width="1.4"/></svg>
<div class="abs" style="left:0.00px;top:34.00px;width:69.80px;height:192.00px;background:#fff;"></div>
<div class="abs" style="left:70.40px;top:34.00px;width:254.60px;height:192.00px;background:#fff;border-left:0.6px solid #d4d4d4;border-top:0.6px solid #e4e4e4"></div>
<svg class="abs" style="left:1.20px;top:36.80px" width="3.2" height="2.4" viewBox="0 0 6 4"><path d="M0.5 0.5 L3 3 L5.5 0.5" stroke="#555" stroke-width="0.7" fill="none"/></svg>
<svg class="abs" style="left:7.00px;top:35.60px" width="5.4" height="4.8" viewBox="0 0 11 10"><path d="M1 0 L10 1.5 L9 7 L0 5.5Z" fill="#3a90e0"/><path d="M0 7 L9 8.5 L9 9.5 L0 8Z" fill="#666"/></svg>
<div class="t" style="top:35.49px;font-size:17.20px;color:#222;left:13.50px;transform-origin:0 0;">计算机</div>
<svg class="abs" style="left:13.40px;top:42.20px" width="5.4" height="4.8" viewBox="0 0 11 10"><path d="M1 0 L10 1.5 L9 7 L0 5.5Z" fill="#3a90e0"/><path d="M0 7 L9 8.5 L9 9.5 L0 8Z" fill="#666"/></svg>
<div class="t" style="top:42.09px;font-size:17.20px;color:#222;left:20.10px;transform-origin:0 0;">系统概述</div>
<svg class="abs" style="left:13.40px;top:48.80px" width="5.4" height="4.8" viewBox="0 0 11 10"><path d="M1 0 L10 1.5 L9 7 L0 5.5Z" fill="#3a90e0"/><path d="M0 7 L9 8.5 L9 9.5 L0 8Z" fill="#666"/></svg>
<div class="t" style="top:48.69px;font-size:17.20px;color:#222;left:20.10px;transform-origin:0 0;">计算机名称</div>
<svg class="abs" style="left:13.40px;top:55.40px" width="5.4" height="4.8" viewBox="0 0 11 10"><path d="M1 0 L10 1.5 L9 7 L0 5.5Z" fill="#3a90e0"/><path d="M0 7 L9 8.5 L9 9.5 L0 8Z" fill="#666"/></svg>
<div class="t" style="top:55.29px;font-size:17.20px;color:#222;left:20.10px;transform-origin:0 0;">DMI</div>
<svg class="abs" style="left:14.40px;top:61.80px" width="3.4" height="5.2" viewBox="0 0 7 11"><path d="M1 0.5 H6 V10.5 H1Z" fill="#1e2630"/><path d="M0 1.5 H1 V10 H0Z" fill="#6a7480"/><rect x="2.4" y="2" width="2.4" height="0.9" fill="#8898a8"/></svg>
<div class="t" style="top:61.89px;font-size:17.20px;color:#222;left:20.10px;transform-origin:0 0;">IPMI</div>
<svg class="abs" style="left:13.40px;top:68.40px" width="4.4" height="5.2" viewBox="0 0 11 13"><path d="M1 3 L3 6 L5 1 Q10 5 10 9 Q9 13 5.5 13 Q1 13 1 9Z" fill="#f5801e"/></svg>
<div class="t" style="top:68.49px;font-size:17.20px;color:#222;left:20.10px;transform-origin:0 0;">超频</div>
<svg class="abs" style="left:14.20px;top:74.90px" width="3.6" height="5.4" viewBox="0 0 7 11"><rect x="1" y="1" width="5" height="10" rx="0.8" fill="#2e9a3a"/><rect x="2.5" y="0" width="2" height="1.2" fill="#2e9a3a"/><rect x="2" y="6" width="3" height="3" fill="#b8e8b8"/></svg>
<div class="t" style="top:75.09px;font-size:17.20px;color:#222;left:20.10px;transform-origin:0 0;">电源管理</div>
<svg class="abs" style="left:13.40px;top:81.80px" width="5.4" height="4.8" viewBox="0 0 11 10"><path d="M1 0 L10 1.5 L9 7 L0 5.5Z" fill="#3a90e0"/><path d="M0 7 L9 8.5 L9 9.5 L0 8Z" fill="#666"/></svg>
<div class="t" style="top:81.69px;font-size:17.20px;color:#222;left:20.10px;transform-origin:0 0;">便携式计算机</div>
<div class="abs" style="left:12.70px;top:87.90px;width:21.60px;height:5.80px;background:#d9d9d9;"></div>
<svg class="abs" style="left:13.40px;top:88.30px" width="5" height="5" viewBox="0 0 10 10"><circle cx="5" cy="5" r="4.3" fill="#fff" stroke="#444" stroke-width="0.9"/><path d="M1.6 6.5 A3.6 3.6 0 0 1 3.4 1.8" stroke="#3aa83a" stroke-width="1.3" fill="none"/><path d="M3.4 1.8 A3.6 3.6 0 0 1 8.4 4.5" stroke="#f0a020" stroke-width="1.3" fill="none"/></svg>
<div class="t" style="top:88.29px;font-size:17.20px;color:#222;left:20.10px;transform-origin:0 0;">传感器</div>
<svg class="abs" style="left:2.30px;top:95.80px" width="2.4" height="3.2" viewBox="0 0 4 6"><path d="M0.5 0.5 L3 3 L0.5 5.5" stroke="#666" stroke-width="0.7" fill="none"/></svg>
<svg class="abs" style="left:7.00px;top:95.10px" width="5.4" height="4.6" viewBox="0 0 11 9"><rect width="11" height="9" fill="#5aa05a"/><rect x="2" y="2" width="4" height="3" fill="#e8f0e8"/><rect x="7" y="2" width="3" height="5" fill="#2a6a2a"/></svg>
<div class="t" style="top:94.89px;font-size:17.20px;color:#222;left:13.50px;transform-origin:0 0;">主板</div>
<svg class="abs" style="left:2.30px;top:102.40px" width="2.4" height="3.2" viewBox="0 0 4 6"><path d="M0.5 0.5 L3 3 L0.5 5.5" stroke="#666" stroke-width="0.7" fill="none"/></svg>
<svg class="abs" style="left:7.00px;top:101.50px" width="5" height="5" viewBox="0 0 10 10"><path d="M0 1.5 L4.5 0.8 V4.6 H0Z M5.2 0.7 L10 0 V4.6 H5.2Z M0 5.3 H4.5 V9.2 L0 8.5Z M5.2 5.3 H10 V10 L5.2 9.3Z" fill="#1f7ae0"/></svg>
<div class="t" style="top:101.49px;font-size:17.20px;color:#222;left:13.50px;transform-origin:0 0;">操作系统</div>
<svg class="abs" style="left:2.30px;top:109.00px" width="2.4" height="3.2" viewBox="0 0 4 6"><path d="M0.5 0.5 L3 3 L0.5 5.5" stroke="#666" stroke-width="0.7" fill="none"/></svg>
<svg class="abs" style="left:8.00px;top:108.00px" width="3.4" height="5.2" viewBox="0 0 7 11"><path d="M1 0.5 H6 V10.5 H1Z" fill="#1e2630"/><path d="M0 1.5 H1 V10 H0Z" fill="#6a7480"/><rect x="2.4" y="2" width="2.4" height="0.9" fill="#8898a8"/></svg>
<div class="t" style="top:108.09px;font-size:17.20px;color:#222;left:13.50px;transform-origin:0 0;">服务器</div>
<svg class="abs" style="left:2.30px;top:115.60px" width="2.4" height="3.2" viewBox="0 0 4 6"><path d="M0.5 0.5 L3 3 L0.5 5.5" stroke="#666" stroke-width="0.7" fill="none"/></svg>
<svg class="abs" style="left:7.00px;top:114.90px" width="5.2" height="4.6" viewBox="0 0 11 10"><path d="M0.5 1 L9.5 0.2 L10.5 7 L1.5 8Z" fill="#2a88e0"/><path d="M2 8.4 H8 V9.4 H2Z" fill="#777"/></svg>
<div class="t" style="top:114.69px;font-size:17.20px;color:#222;left:13.50px;transform-origin:0 0;">显示设备</div>
<svg class="abs" style="left:2.30px;top:122.20px" width="2.4" height="3.2" viewBox="0 0 4 6"><path d="M0.5 0.5 L3 3 L0.5 5.5" stroke="#666" stroke-width="0.7" fill="none"/></svg>
<svg class="abs" style="left:7.40px;top:121.40px" width="4.8" height="4.8" viewBox="0 0 10 10"><circle cx="5" cy="5" r="4.2" fill="#d8d8d8" stroke="#777" stroke-width="0.9"/><circle cx="5" cy="5" r="1.4" fill="#fff" stroke="#777" stroke-width="0.6"/></svg>
<div class="t" style="top:121.29px;font-size:17.20px;color:#222;left:13.50px;transform-origin:0 0;">多媒体</div>
<svg class="abs" style="left:2.30px;top:128.80px" width="2.4" height="3.2" viewBox="0 0 4 6"><path d="M0.5 0.5 L3 3 L0.5 5.5" stroke="#666" stroke-width="0.7" fill="none"/></svg>
<svg class="abs" style="left:7.00px;top:129.00px" width="5.6" height="3.4" viewBox="0 0 12 7"><path d="M0 3.5 L8 1 L12 2.5 L4 5Z" fill="#8a8a8a"/><path d="M0 3.5 L4 5 L4 6.5 L0 5Z" fill="#333"/><path d="M4 5 L12 2.5 V4 L4 6.5Z" fill="#555"/></svg>
<div class="t" style="top:127.89px;font-size:17.20px;color:#222;left:13.50px;transform-origin:0 0;">存储设备</div>
<svg class="abs" style="left:2.30px;top:135.40px" width="2.4" height="3.2" viewBox="0 0 4 6"><path d="M0.5 0.5 L3 3 L0.5 5.5" stroke="#666" stroke-width="0.7" fill="none"/></svg>
<svg class="abs" style="left:7.00px;top:134.70px" width="5.2" height="4.6" viewBox="0 0 11 10"><path d="M0.5 1 L9.5 0.2 L10.5 7 L1.5 8Z" fill="#2a88e0"/><path d="M2 8.4 H8 V9.4 H2Z" fill="#777"/></svg>
<div class="t" style="top:134.49px;font-size:17.20px;color:#222;left:13.50px;transform-origin:0 0;">网络设备</div>
<svg class="abs" style="left:2.30px;top:142.00px" width="2.4" height="3.2" viewBox="0 0 4 6"><path d="M0.5 0.5 L3 3 L0.5 5.5" stroke="#666" stroke-width="0.7" fill="none"/></svg>
<svg class="abs" style="left:7.00px;top:141.00px" width="5.2" height="5.2" viewBox="0 0 10 10"><circle cx="5" cy="5" r="5" fill="#3ab83a"/><path d="M2.5 3 L5 7 L7.5 3" stroke="#fff" stroke-width="1.4" fill="none"/></svg>
<div class="t" style="top:141.09px;font-size:17.20px;color:#222;left:13.50px;transform-origin:0 0;">DirectX</div>
<svg class="abs" style="left:2.30px;top:148.60px" width="2.4" height="3.2" viewBox="0 0 4 6"><path d="M0.5 0.5 L3 3 L0.5 5.5" stroke="#666" stroke-width="0.7" fill="none"/></svg>
<svg class="abs" style="left:8.00px;top:147.60px" width="3.4" height="5.2" viewBox="0 0 7 11"><path d="M1 0.5 H6 V10.5 H1Z" fill="#1e2630"/><path d="M0 1.5 H1 V10 H0Z" fill="#6a7480"/><rect x="2.4" y="2" width="2.4" height="0.9" fill="#8898a8"/></svg>
<div class="t" style="top:147.69px;font-size:17.20px;color:#222;left:13.50px;transform-origin:0 0;">设备</div>
<svg class="abs" style="left:2.30px;top:155.20px" width="2.4" height="3.2" viewBox="0 0 4 6"><path d="M0.5 0.5 L3 3 L0.5 5.5" stroke="#666" stroke-width="0.7" fill="none"/></svg>
<svg class="abs" style="left:7.40px;top:154.40px" width="4.8" height="4.8" viewBox="0 0 10 10"><circle cx="5" cy="5" r="4.2" fill="#d8d8d8" stroke="#777" stroke-width="0.9"/><circle cx="5" cy="5" r="1.4" fill="#fff" stroke="#777" stroke-width="0.6"/></svg>
<div class="t" style="top:154.29px;font-size:17.20px;color:#222;left:13.50px;transform-origin:0 0;">软件</div>
<svg class="abs" style="left:2.30px;top:161.80px" width="2.4" height="3.2" viewBox="0 0 4 6"><path d="M0.5 0.5 L3 3 L0.5 5.5" stroke="#666" stroke-width="0.7" fill="none"/></svg>
<svg class="abs" style="left:7.00px;top:160.70px" width="5" height="5.4" viewBox="0 0 10 11"><path d="M5 0 L10 2 Q10 8 5 11 Q0 8 0 2Z" fill="#e8402a"/><path d="M5 0 L10 2 L10 5.5 L5 5.5Z" fill="#3aa83a"/><path d="M0 5.5 L5 5.5 L5 11 Q1 8.5 0 5.5Z" fill="#2a80e0"/><path d="M5 5.5 L10 5.5 Q9 9 5 11Z" fill="#f0c020"/></svg>
<div class="t" style="top:160.89px;font-size:17.20px;color:#222;left:13.50px;transform-origin:0 0;">安全性</div>
<svg class="abs" style="left:2.30px;top:168.40px" width="2.4" height="3.2" viewBox="0 0 4 6"><path d="M0.5 0.5 L3 3 L0.5 5.5" stroke="#666" stroke-width="0.7" fill="none"/></svg>
<svg class="abs" style="left:7.00px;top:167.50px" width="5" height="5" viewBox="0 0 10 10"><circle cx="5" cy="5" r="4" fill="#e8eef4" stroke="#8a9aaa" stroke-width="0.9"/><path d="M3 7 L7 3" stroke="#6a8aaa" stroke-width="1"/></svg>
<div class="t" style="top:167.49px;font-size:17.20px;color:#222;left:13.50px;transform-origin:0 0;">配置</div>
<svg class="abs" style="left:2.30px;top:175.00px" width="2.4" height="3.2" viewBox="0 0 4 6"><path d="M0.5 0.5 L3 3 L0.5 5.5" stroke="#666" stroke-width="0.7" fill="none"/></svg>
<svg class="abs" style="left:7.00px;top:174.30px" width="5.2" height="4.6" viewBox="0 0 11 10"><path d="M0.5 1 L9.5 0.2 L10.5 7 L1.5 8Z" fill="#2a88e0"/><path d="M2 8.4 H8 V9.4 H2Z" fill="#777"/></svg>
<div class="t" style="top:174.09px;font-size:17.20px;color:#222;left:13.50px;transform-origin:0 0;">数据库</div>
<svg class="abs" style="left:2.30px;top:181.60px" width="2.4" height="3.2" viewBox="0 0 4 6"><path d="M0.5 0.5 L3 3 L0.5 5.5" stroke="#666" stroke-width="0.7" fill="none"/></svg>
<svg class="abs" style="left:7.00px;top:180.80px" width="5.4" height="4.8" viewBox="0 0 11 10"><rect width="11" height="10" rx="1" fill="#f5a030"/><path d="M2 7 L4 4 L6 6 L9 2" stroke="#fff" stroke-width="1" fill="none"/></svg>
<div class="t" style="top:180.69px;font-size:17.20px;color:#222;left:13.50px;transform-origin:0 0;">性能测试</div>
<div class="t" style="top:36.54px;font-size:16.80px;color:#333;left:72.50px;transform-origin:0 0;">项目</div>
<div class="t" style="top:36.54px;font-size:16.80px;color:#333;left:143.00px;transform-origin:0 0;">当前值</div>
<div class="abs" style="left:70.90px;top:42.10px;width:254.00px;height:0.50px;background:#ececec;"></div>
<svg class="abs" style="left:72.30px;top:43.30px" width="5" height="5" viewBox="0 0 10 10"><circle cx="5" cy="5" r="4.3" fill="#fff" stroke="#444" stroke-width="0.9"/><path d="M1.6 6.5 A3.6 3.6 0 0 1 3.4 1.8" stroke="#3aa83a" stroke-width="1.3" fill="none"/><path d="M3.4 1.8 A3.6 3.6 0 0 1 8.4 4.5" stroke="#f0a020" stroke-width="1.3" fill="none"/></svg>
<div class="t" style="top:43.74px;font-size:16.80px;color:#222;left:78.00px;transform-origin:0 0;">传感器</div>
<svg class="abs" style="left:77.60px;top:50.13px" width="5" height="5" viewBox="0 0 10 10"><circle cx="5" cy="5" r="4.3" fill="#fff" stroke="#444" stroke-width="0.9"/><path d="M1.6 6.5 A3.6 3.6 0 0 1 3.4 1.8" stroke="#3aa83a" stroke-width="1.3" fill="none"/><path d="M3.4 1.8 A3.6 3.6 0 0 1 8.4 4.5" stroke="#f0a020" stroke-width="1.3" fill="none"/></svg>
<div class="t" style="top:50.57px;font-size:16.80px;color:#222;left:83.50px;transform-origin:0 0;">传感器类型</div>
<div class="t" style="top:49.92px;font-size:16.40px;color:#333;left:143.00px;transform-origin:0 0;">Nuvoton NCT6687D-M</div>
<svg class="abs" style="left:77.60px;top:56.86px" width="5.4" height="5.2" viewBox="0 0 11 10"><path d="M0 1 L6 0 L9 5 L3 6Z" fill="#3a90e0"/><rect x="4" y="5" width="7" height="5" fill="#2e6a2e"/></svg>
<div class="t" style="top:57.40px;font-size:16.80px;color:#222;left:83.50px;transform-origin:0 0;">GPU 传感器类型</div>
<div class="t" style="top:56.75px;font-size:16.40px;color:#333;left:143.00px;transform-origin:0 0;">PMLog  (ADL2)</div>
<svg class="abs" style="left:77.60px;top:63.99px" width="5.4" height="4.6" viewBox="0 0 11 9"><rect width="11" height="9" fill="#5aa05a"/><rect x="2" y="2" width="4" height="3" fill="#e8f0e8"/><rect x="7" y="2" width="3" height="5" fill="#2a6a2a"/></svg>
<div class="t" style="top:64.23px;font-size:16.80px;color:#222;left:83.50px;transform-origin:0 0;">主板名称</div>
<div class="t" style="top:63.58px;font-size:16.40px;color:#333;left:143.00px;transform-origin:0 0;">MSI MS-7E61</div>
<svg class="abs" style="left:72.30px;top:77.15px" width="3" height="5.6" viewBox="0 0 6 11"><rect x="2" y="0" width="2" height="8" fill="#c8c8c8"/><rect x="2" y="3" width="2" height="6" fill="#d42020"/><circle cx="3" cy="9" r="2" fill="#d42020"/></svg>
<div class="t" style="top:77.89px;font-size:16.80px;color:#222;left:78.00px;transform-origin:0 0;">温度</div>
<svg class="abs" style="left:77.60px;top:84.48px" width="5.4" height="4.6" viewBox="0 0 11 9"><rect width="11" height="9" fill="#5aa05a"/><rect x="2" y="2" width="4" height="3" fill="#e8f0e8"/><rect x="7" y="2" width="3" height="5" fill="#2a6a2a"/></svg>
<div class="t" style="top:84.72px;font-size:16.80px;color:#222;left:83.50px;transform-origin:0 0;">主板</div>
<div class="t" style="top:84.07px;font-size:16.40px;color:#333;left:143.00px;transform-origin:0 0;">62 °C</div>
<svg class="abs" style="left:77.60px;top:92.01px" width="6" height="3.2" viewBox="0 0 12 6"><path d="M0 3 L6 1 L12 3 L6 5Z" fill="#b0b8a0"/><path d="M0 3 L6 5 L12 3 L12 4 L6 6 L0 4Z" fill="#5a7040"/></svg>
<div class="t" style="top:91.55px;font-size:16.80px;color:#222;left:83.50px;transform-origin:0 0;">中央处理器(CPU)</div>
<div class="t" style="top:90.90px;font-size:16.40px;color:#333;left:143.00px;transform-origin:0 0;">92 °C</div>
<svg class="abs" style="left:77.60px;top:98.84px" width="6" height="3.2" viewBox="0 0 12 6"><path d="M0 3 L6 1 L12 3 L6 5Z" fill="#b0b8a0"/><path d="M0 3 L6 5 L12 3 L12 4 L6 6 L0 4Z" fill="#5a7040"/></svg>
<div class="t" style="top:98.38px;font-size:16.80px;color:#222;left:83.50px;transform-origin:0 0;">CPU 二极管</div>
<div class="t" style="top:97.73px;font-size:16.40px;color:#333;left:143.00px;transform-origin:0 0;">93 °C</div>
<svg class="abs" style="left:77.60px;top:105.67px" width="6" height="3.2" viewBox="0 0 12 6"><path d="M0 3 L6 1 L12 3 L6 5Z" fill="#b0b8a0"/><path d="M0 3 L6 5 L12 3 L12 4 L6 6 L0 4Z" fill="#5a7040"/></svg>
<div class="t" style="top:105.21px;font-size:16.80px;color:#222;left:83.50px;transform-origin:0 0;">CCD #1</div>
<div class="t" style="top:104.56px;font-size:16.40px;color:#333;left:143.00px;transform-origin:0 0;">93 °C</div>
<svg class="abs" style="left:77.60px;top:112.50px" width="6" height="3.2" viewBox="0 0 12 6"><path d="M0 3 L6 1 L12 3 L6 5Z" fill="#b0b8a0"/><path d="M0 3 L6 5 L12 3 L12 4 L6 6 L0 4Z" fill="#5a7040"/></svg>
<div class="t" style="top:112.04px;font-size:16.80px;color:#222;left:83.50px;transform-origin:0 0;">CCD #2</div>
<div class="t" style="top:111.39px;font-size:16.40px;color:#333;left:143.00px;transform-origin:0 0;">90 °C</div>
<svg class="abs" style="left:77.60px;top:119.33px" width="6" height="3.2" viewBox="0 0 12 6"><path d="M0 3 L6 1 L12 3 L6 5Z" fill="#777"/><path d="M0 3 L6 5 L12 3 L12 4 L6 6 L0 4Z" fill="#333"/></svg>
<div class="t" style="top:118.87px;font-size:16.80px;color:#222;left:83.50px;transform-origin:0 0;">芯片组</div>
<div class="t" style="top:118.22px;font-size:16.40px;color:#333;left:143.00px;transform-origin:0 0;">54 °C</div>
<svg class="abs" style="left:77.60px;top:126.16px" width="6" height="3.2" viewBox="0 0 12 6"><path d="M0 3 L6 1 L12 3 L6 5Z" fill="#777"/><path d="M0 3 L6 5 L12 3 L12 4 L6 6 L0 4Z" fill="#333"/></svg>
<div class="t" style="top:125.70px;font-size:16.80px;color:#222;left:83.50px;transform-origin:0 0;">PCH 二极管</div>
<div class="t" style="top:125.05px;font-size:16.40px;color:#333;left:143.00px;transform-origin:0 0;">60 °C</div>
<svg class="abs" style="left:78.40px;top:131.89px" width="3.6" height="5.4" viewBox="0 0 7 11"><rect x="1" y="1" width="5" height="10" rx="0.8" fill="#2e9a3a"/><rect x="2.5" y="0" width="2" height="1.2" fill="#2e9a3a"/><rect x="2" y="6" width="3" height="3" fill="#b8e8b8"/></svg>
<div class="t" style="top:132.53px;font-size:16.80px;color:#222;left:83.50px;transform-origin:0 0;">MOS</div>
<div class="t" style="top:131.88px;font-size:16.40px;color:#333;left:143.00px;transform-origin:0 0;">83 °C</div>
<svg class="abs" style="left:77.60px;top:138.82px" width="5.4" height="5.2" viewBox="0 0 11 10"><path d="M0 1 L6 0 L9 5 L3 6Z" fill="#3a90e0"/><rect x="4" y="5" width="7" height="5" fill="#2e6a2e"/></svg>
<div class="t" style="top:139.36px;font-size:16.80px;color:#222;left:83.50px;transform-origin:0 0;">GPU1: 图形处理器(GPU)</div>
<div class="t" style="top:138.71px;font-size:16.40px;color:#333;left:143.00px;transform-origin:0 0;">47 °C</div>
<svg class="abs" style="left:77.60px;top:145.65px" width="5.4" height="5.2" viewBox="0 0 11 10"><path d="M0 1 L6 0 L9 5 L3 6Z" fill="#3a90e0"/><rect x="4" y="5" width="7" height="5" fill="#2e6a2e"/></svg>
<div class="t" style="top:146.19px;font-size:16.80px;color:#222;left:83.50px;transform-origin:0 0;">GPU1: GPU温度</div>
<div class="t" style="top:145.54px;font-size:16.40px;color:#333;left:143.00px;transform-origin:0 0;">56 °C</div>
<svg class="abs" style="left:77.60px;top:152.48px" width="5.4" height="5.2" viewBox="0 0 11 10"><path d="M0 1 L6 0 L9 5 L3 6Z" fill="#3a90e0"/><rect x="4" y="5" width="7" height="5" fill="#2e6a2e"/></svg>
<div class="t" style="top:153.02px;font-size:16.80px;color:#222;left:83.50px;transform-origin:0 0;">GPU2: 图形处理器(GPU)</div>
<div class="t" style="top:152.37px;font-size:16.40px;color:#333;left:143.00px;transform-origin:0 0;">48 °C</div>
<svg class="abs" style="left:77.60px;top:159.31px" width="5.4" height="5.2" viewBox="0 0 11 10"><path d="M0 1 L6 0 L9 5 L3 6Z" fill="#3a90e0"/><rect x="4" y="5" width="7" height="5" fill="#2e6a2e"/></svg>
<div class="t" style="top:159.85px;font-size:16.80px;color:#222;left:83.50px;transform-origin:0 0;">GPU2: GPU SoC</div>
<div class="t" style="top:159.20px;font-size:16.40px;color:#333;left:143.00px;transform-origin:0 0;">54 °C</div>
<svg class="abs" style="left:77.60px;top:167.24px" width="6" height="3" viewBox="0 0 12 6"><rect width="12" height="6" fill="#2e6a2e"/><rect x="1" y="1" width="10" height="3" fill="#183e18"/></svg>
<div class="t" style="top:166.68px;font-size:16.80px;color:#222;left:83.50px;transform-origin:0 0;">DIMM2</div>
<div class="t" style="top:166.03px;font-size:16.40px;color:#333;left:143.00px;transform-origin:0 0;">49 °C</div>
<svg class="abs" style="left:77.60px;top:174.07px" width="6" height="3" viewBox="0 0 12 6"><rect width="12" height="6" fill="#2e6a2e"/><rect x="1" y="1" width="10" height="3" fill="#183e18"/></svg>
<div class="t" style="top:173.51px;font-size:16.80px;color:#222;left:83.50px;transform-origin:0 0;">DIMM4</div>
<div class="t" style="top:172.86px;font-size:16.40px;color:#333;left:143.00px;transform-origin:0 0;">46 °C</div>
<svg class="abs" style="left:77.60px;top:180.80px" width="6" height="3.2" viewBox="0 0 12 6"><path d="M0 3 L6 1 L12 3 L6 5Z" fill="#777"/><path d="M0 3 L6 5 L12 3 L12 4 L6 6 L0 4Z" fill="#333"/></svg>
<div class="t" style="top:180.34px;font-size:16.80px;color:#222;left:83.50px;transform-origin:0 0;">ZHITAI Ti600 2000GB</div>
<div class="t" style="top:179.69px;font-size:16.40px;color:#333;left:143.00px;transform-origin:0 0;">39 °C / 45 °C</div>
<svg class="abs" style="left:72.30px;top:193.46px" width="5.2" height="5.2" viewBox="0 0 10 10"><rect width="10" height="10" fill="#3a80c0"/><path d="M5 1 Q7 4 5 5 Q3 6 5 9 M1 5 Q4 3 5 5 Q6 7 9 5" stroke="#fff" stroke-width="1" fill="none"/></svg>
<div class="t" style="top:194.00px;font-size:16.80px;color:#222;left:78.00px;transform-origin:0 0;">冷却风扇</div>
<svg class="abs" style="left:77.60px;top:201.29px" width="6" height="3.2" viewBox="0 0 12 6"><path d="M0 3 L6 1 L12 3 L6 5Z" fill="#b0b8a0"/><path d="M0 3 L6 5 L12 3 L12 4 L6 6 L0 4Z" fill="#5a7040"/></svg>
<div class="t" style="top:200.83px;font-size:16.80px;color:#222;left:83.50px;transform-origin:0 0;">中央处理器(CPU)</div>
<div class="t" style="top:200.18px;font-size:16.40px;color:#333;left:143.00px;transform-origin:0 0;">2086 RPM</div>
<svg class="abs" style="left:77.60px;top:207.12px" width="5.2" height="5.2" viewBox="0 0 10 10"><circle cx="5" cy="5" r="4.6" fill="#fff" stroke="#3a90e0" stroke-width="0.9"/><path d="M5 2 Q7.5 5.5 5 8 Q2.5 5.5 5 2Z" fill="#3a90e0"/></svg>
<div class="t" style="top:207.66px;font-size:16.80px;color:#222;left:83.50px;transform-origin:0 0;">水泵</div>
<div class="t" style="top:207.01px;font-size:16.40px;color:#333;left:143.00px;transform-origin:0 0;">3045 RPM</div>
<svg class="abs" style="left:77.60px;top:213.95px" width="5.4" height="5.2" viewBox="0 0 11 10"><path d="M0 1 L6 0 L9 5 L3 6Z" fill="#3a90e0"/><rect x="4" y="5" width="7" height="5" fill="#2e6a2e"/></svg>
<div class="t" style="top:214.49px;font-size:16.80px;color:#222;left:83.50px;transform-origin:0 0;">GPU1: 图形处理器(GPU)</div>
<div class="t" style="top:213.84px;font-size:16.40px;color:#333;left:143.00px;transform-origin:0 0;">0 RPM  (0%)</div>
<div class="abs" style="left:0.00px;top:226.00px;width:325.00px;height:8.50px;background:#f4f4f4;border-top:0.5px solid #e2e2e2"></div>
<svg class="abs" style="left:0.40px;top:228.00px" width="5" height="5" viewBox="0 0 10 10"><circle cx="5" cy="5" r="4.3" fill="#fff" stroke="#444" stroke-width="0.9"/><path d="M1.6 6.5 A3.6 3.6 0 0 1 3.4 1.8" stroke="#3aa83a" stroke-width="1.3" fill="none"/><path d="M3.4 1.8 A3.6 3.6 0 0 1 8.4 4.5" stroke="#f0a020" stroke-width="1.3" fill="none"/></svg>
<div class="t" style="top:228.39px;font-size:17.20px;color:#222;left:6.60px;transform-origin:0 0;">传感器</div>
<div class="t" style="top:228.59px;font-size:16.40px;color:#333;left:170.00px;transform-origin:0 0;">Copyright (c) 1995-2025 FinalWire Ltd.</div>
</div>
<div class="win" id="w3" style="left:512.2px;top:66px;width:263.2px;height:231.6px;background:#fff;border-radius:3px;box-shadow:0 6px 16px rgba(0,0,0,.45);overflow:visible">
<div class="abs" style="left:0;top:0;width:263.2px;height:231.6px;border-radius:3px;overflow:hidden;background:#fff">
<div class="abs" style="left:0.00px;top:0.00px;width:263.20px;height:9.50px;background:#6c1834;"></div>
<svg class="abs" style="left:2.8px;top:1.8px" width="6.2" height="6" viewBox="0 0 12 12"><rect x="0.5" y="0.5" width="11" height="8" rx="0.8" fill="#2a6ab8"/><rect x="1.6" y="1.5" width="8.8" height="5.6" fill="#e8f2fc"/><path d="M2 6 L5 3.5 L7 5 L10 2.5" stroke="#3a8ad8" stroke-width="0.9" fill="none"/><rect x="1" y="9" width="10" height="2.6" fill="#2a2a2a"/></svg>
<div class="t" style="top:2.67px;font-size:16.60px;color:#f4e8ec;left:10.30px;transform-origin:0 0;">HWiNFO® 64 v8.21-5660 - 传感器状态</div>
<div class="abs" style="left:219.30px;top:5.00px;width:4.00px;height:0.45px;background:#dcc4cc;"></div>
<div class="abs" style="left:235.3px;top:3.2px;width:4px;height:4px;border:0.55px solid #e0ccd4;border-radius:1.3px"></div>
<svg class="abs" style="left:252.3px;top:3.1px" width="4.4" height="4.4" viewBox="0 0 4 4"><path d="M0 0L4 4M4 0L0 4" stroke="#eadce2" stroke-width="0.5"/></svg>
<div class="abs" style="left:13.60px;top:17.80px;width:237.80px;height:0.00px;background:#fff;"></div>
<div class="t" style="top:12.07px;font-size:16.60px;color:#333;left:2.30px;transform-origin:0 0;">传感器</div>
<div class="t" style="top:12.07px;font-size:16.60px;color:#333;right:122.90px;transform-origin:100% 0;">当前</div>
<div class="t" style="top:12.07px;font-size:16.60px;color:#333;right:86.40px;transform-origin:100% 0;">最小</div>
<div class="t" style="top:12.07px;font-size:16.60px;color:#333;right:49.40px;transform-origin:100% 0;">最大</div>
<div class="t" style="top:12.07px;font-size:16.60px;color:#333;right:12.60px;transform-origin:100% 0;">平均</div>
<div class="abs" style="left:105.80px;top:12.19px;width:0.50px;height:4.82px;background:#f3f3f3;"></div>
<div class="abs" style="left:142.50px;top:12.19px;width:0.50px;height:4.82px;background:#f3f3f3;"></div>
<div class="abs" style="left:179.00px;top:12.19px;width:0.50px;height:4.82px;background:#f3f3f3;"></div>
<div class="abs" style="left:215.60px;top:12.19px;width:0.50px;height:4.82px;background:#f3f3f3;"></div>
<svg class="abs" style="left:8.00px;top:18.92px" width="4.8" height="5" viewBox="0 0 9 9.4"><path d="M7.6 2.4 A3.9 3.9 0 1 0 8.2 6.2" stroke="#4a4a4a" stroke-width="1.2" fill="none"/><path d="M6.2 0.6 L8.6 2.8 L5.6 3.4Z" fill="#4a4a4a"/><path d="M4.6 2.8 V5 L6.2 5.8" stroke="#4a4a4a" stroke-width="0.9" fill="none"/></svg>
<div class="t" style="top:19.39px;font-size:16.60px;color:#333;left:14.30px;transform-origin:0 0;">过热降频 (PROCHOT EXT)</div>
<div class="t" style="top:19.46px;font-size:16.00px;color:#333;right:122.90px;transform-origin:100% 0;">否</div>
<div class="t" style="top:19.46px;font-size:16.00px;color:#333;right:86.40px;transform-origin:100% 0;">否</div>
<div class="t" style="top:19.46px;font-size:16.00px;color:#333;right:49.40px;transform-origin:100% 0;">否</div>
<div class="t" style="top:19.46px;font-size:16.00px;color:#333;right:12.60px;transform-origin:100% 0;">0 %</div>
<div class="abs" style="left:13.60px;top:24.83px;width:237.80px;height:6.82px;background:#f0f0f0;"></div>
<svg class="abs" style="left:8.00px;top:25.74px" width="4.8" height="5" viewBox="0 0 9 9.4"><path d="M7.6 2.4 A3.9 3.9 0 1 0 8.2 6.2" stroke="#4a4a4a" stroke-width="1.2" fill="none"/><path d="M6.2 0.6 L8.6 2.8 L5.6 3.4Z" fill="#4a4a4a"/><path d="M4.6 2.8 V5 L6.2 5.8" stroke="#4a4a4a" stroke-width="0.9" fill="none"/></svg>
<div class="t" style="top:26.21px;font-size:16.60px;color:#333;left:14.30px;transform-origin:0 0;">DRAM 读取带宽</div>
<div class="t" style="top:26.28px;font-size:16.00px;color:#333;right:122.90px;transform-origin:100% 0;">0.129 GB/s</div>
<div class="t" style="top:26.28px;font-size:16.00px;color:#333;right:86.40px;transform-origin:100% 0;">0.129 GB/s</div>
<div class="t" style="top:26.28px;font-size:16.00px;color:#333;right:49.40px;transform-origin:100% 0;">0.129 GB/s</div>
<div class="t" style="top:26.28px;font-size:16.00px;color:#333;right:12.60px;transform-origin:100% 0;">0.129 GB/s</div>
<svg class="abs" style="left:8.00px;top:32.56px" width="4.8" height="5" viewBox="0 0 9 9.4"><path d="M7.6 2.4 A3.9 3.9 0 1 0 8.2 6.2" stroke="#4a4a4a" stroke-width="1.2" fill="none"/><path d="M6.2 0.6 L8.6 2.8 L5.6 3.4Z" fill="#4a4a4a"/><path d="M4.6 2.8 V5 L6.2 5.8" stroke="#4a4a4a" stroke-width="0.9" fill="none"/></svg>
<div class="t" style="top:33.03px;font-size:16.60px;color:#333;left:14.30px;transform-origin:0 0;">DRAM 写入带宽</div>
<div class="t" style="top:33.10px;font-size:16.00px;color:#333;right:122.90px;transform-origin:100% 0;">0.058 GB/s</div>
<div class="t" style="top:33.10px;font-size:16.00px;color:#333;right:86.40px;transform-origin:100% 0;">0.058 GB/s</div>
<div class="t" style="top:33.10px;font-size:16.00px;color:#333;right:49.40px;transform-origin:100% 0;">0.058 GB/s</div>
<div class="t" style="top:33.10px;font-size:16.00px;color:#333;right:12.60px;transform-origin:100% 0;">0.058 GB/s</div>
<div class="abs" style="left:13.60px;top:38.47px;width:237.80px;height:6.82px;background:#f0f0f0;"></div>
<svg class="abs" style="left:8.00px;top:39.38px" width="4.8" height="5" viewBox="0 0 9 9.4"><path d="M7.6 2.4 A3.9 3.9 0 1 0 8.2 6.2" stroke="#4a4a4a" stroke-width="1.2" fill="none"/><path d="M6.2 0.6 L8.6 2.8 L5.6 3.4Z" fill="#4a4a4a"/><path d="M4.6 2.8 V5 L6.2 5.8" stroke="#4a4a4a" stroke-width="0.9" fill="none"/></svg>
<div class="t" style="top:39.85px;font-size:16.60px;color:#333;left:14.30px;transform-origin:0 0;">活动核心的平均数</div>
<div class="t" style="top:39.92px;font-size:16.00px;color:#333;right:122.90px;transform-origin:100% 0;">16.0</div>
<div class="t" style="top:39.92px;font-size:16.00px;color:#333;right:86.40px;transform-origin:100% 0;">16.0</div>
<div class="t" style="top:39.92px;font-size:16.00px;color:#333;right:49.40px;transform-origin:100% 0;">16.0</div>
<div class="t" style="top:39.92px;font-size:16.00px;color:#333;right:12.60px;transform-origin:100% 0;">16.0</div>
<div class="abs" style="left:13.60px;top:52.11px;width:237.80px;height:6.82px;background:#dcdcdc;"></div>
<svg class="abs" style="left:3.80px;top:54.32px" width="3.2" height="2.4" viewBox="0 0 6 4"><path d="M0.5 0.5 L3 3 L5.5 0.5" stroke="#555" stroke-width="0.7" fill="none"/></svg>
<div class="abs" style="left:9.80px;top:53.22px;width:2.4px;height:4.6px;background:#333;border-radius:0.3px"></div>
<div class="t" style="top:53.41px;font-size:17.20px;color:#111;left:14.30px;transform-origin:0 0;font-weight:bold;">MSI MAG B850M MORTAR WIFI (MS-7E61) (Nuvoton NCT6687D)</div>
<div class="abs" style="left:105.80px;top:58.93px;width:35.60px;height:6.82px;background:#cce4f7;"></div>
<svg class="abs" style="left:9.40px;top:59.74px" width="2.6" height="5.2" viewBox="0 0 6 11"><rect x="2" y="0" width="2" height="8" fill="#bbb"/><rect x="2" y="3" width="2" height="6" fill="#d42020"/><circle cx="3" cy="9" r="2" fill="#d42020"/></svg>
<div class="t" style="top:60.31px;font-size:16.60px;color:#333;left:14.30px;transform-origin:0 0;">CPU</div>
<div class="t" style="top:60.38px;font-size:16.00px;color:#333;right:122.90px;transform-origin:100% 0;">92.0 °C</div>
<div class="t" style="top:60.38px;font-size:16.00px;color:#333;right:86.40px;transform-origin:100% 0;">91.0 °C</div>
<div class="t" style="top:60.38px;font-size:16.00px;color:#333;right:49.40px;transform-origin:100% 0;">92.0 °C</div>
<div class="t" style="top:60.38px;font-size:16.00px;color:#333;right:12.60px;transform-origin:100% 0;">91.4 °C</div>
<div class="abs" style="left:13.60px;top:65.75px;width:237.80px;height:6.82px;background:#f0f0f0;"></div>
<svg class="abs" style="left:9.40px;top:66.56px" width="2.6" height="5.2" viewBox="0 0 6 11"><rect x="2" y="0" width="2" height="8" fill="#bbb"/><rect x="2" y="3" width="2" height="6" fill="#d42020"/><circle cx="3" cy="9" r="2" fill="#d42020"/></svg>
<div class="t" style="top:67.13px;font-size:16.60px;color:#333;left:14.30px;transform-origin:0 0;">系统</div>
<div class="t" style="top:67.20px;font-size:16.00px;color:#333;right:122.90px;transform-origin:100% 0;">62.0 °C</div>
<div class="t" style="top:67.20px;font-size:16.00px;color:#333;right:86.40px;transform-origin:100% 0;">61.5 °C</div>
<div class="t" style="top:67.20px;font-size:16.00px;color:#333;right:49.40px;transform-origin:100% 0;">62.0 °C</div>
<div class="t" style="top:67.20px;font-size:16.00px;color:#333;right:12.60px;transform-origin:100% 0;">61.9 °C</div>
<div class="abs" style="left:13.60px;top:72.57px;width:237.80px;height:6.82px;background:#0a78d7;"></div>
<svg class="abs" style="left:9.40px;top:73.38px" width="2.6" height="5.2" viewBox="0 0 6 11"><rect x="2" y="0" width="2" height="8" fill="#bbb"/><rect x="2" y="3" width="2" height="6" fill="#d42020"/><circle cx="3" cy="9" r="2" fill="#d42020"/></svg>
<div class="t" style="top:73.95px;font-size:16.60px;color:#fff;left:14.30px;transform-origin:0 0;">MOS</div>
<div class="t" style="top:74.02px;font-size:16.00px;color:#fff;right:122.90px;transform-origin:100% 0;">83.0 °C</div>
<div class="t" style="top:74.02px;font-size:16.00px;color:#fff;right:86.40px;transform-origin:100% 0;">82.5 °C</div>
<div class="t" style="top:74.02px;font-size:16.00px;color:#fff;right:49.40px;transform-origin:100% 0;">83.0 °C</div>
<div class="t" style="top:74.02px;font-size:16.00px;color:#fff;right:12.60px;transform-origin:100% 0;">82.7 °C</div>
<div class="abs" style="left:13.60px;top:79.39px;width:237.80px;height:6.82px;background:#f0f0f0;"></div>
<svg class="abs" style="left:9.40px;top:80.20px" width="2.6" height="5.2" viewBox="0 0 6 11"><rect x="2" y="0" width="2" height="8" fill="#bbb"/><rect x="2" y="3" width="2" height="6" fill="#d42020"/><circle cx="3" cy="9" r="2" fill="#d42020"/></svg>
<div class="t" style="top:80.77px;font-size:16.60px;color:#333;left:14.30px;transform-origin:0 0;">芯片组 A</div>
<div class="t" style="top:80.84px;font-size:16.00px;color:#333;right:122.90px;transform-origin:100% 0;">54.0 °C</div>
<div class="t" style="top:80.84px;font-size:16.00px;color:#333;right:86.40px;transform-origin:100% 0;">54.0 °C</div>
<div class="t" style="top:80.84px;font-size:16.00px;color:#333;right:49.40px;transform-origin:100% 0;">54.0 °C</div>
<div class="t" style="top:80.84px;font-size:16.00px;color:#333;right:12.60px;transform-origin:100% 0;">54.0 °C</div>
<svg class="abs" style="left:9.40px;top:87.02px" width="2.6" height="5.2" viewBox="0 0 6 11"><rect x="2" y="0" width="2" height="8" fill="#bbb"/><rect x="2" y="3" width="2" height="6" fill="#d42020"/><circle cx="3" cy="9" r="2" fill="#d42020"/></svg>
<div class="t" style="top:87.59px;font-size:16.60px;color:#333;left:14.30px;transform-origin:0 0;">T15</div>
<div class="t" style="top:87.66px;font-size:16.00px;color:#333;right:122.90px;transform-origin:100% 0;">83.0 °C</div>
<div class="t" style="top:87.66px;font-size:16.00px;color:#333;right:86.40px;transform-origin:100% 0;">82.5 °C</div>
<div class="t" style="top:87.66px;font-size:16.00px;color:#333;right:49.40px;transform-origin:100% 0;">83.0 °C</div>
<div class="t" style="top:87.66px;font-size:16.00px;color:#333;right:12.60px;transform-origin:100% 0;">82.8 °C</div>
<div class="abs" style="left:13.60px;top:93.03px;width:237.80px;height:6.82px;background:#f0f0f0;"></div>
<div class="abs" style="left:105.80px;top:93.03px;width:35.60px;height:6.82px;background:#cce4f7;"></div>
<svg class="abs" style="left:9.00px;top:93.64px" width="3" height="5.6" viewBox="0 0 6 11"><path d="M4 0 L0.5 6 L3 6 L1.5 11 L5.5 4.5 L3 4.5 L5 0Z" fill="#f0b418"/></svg>
<div class="t" style="top:94.41px;font-size:16.60px;color:#333;left:14.30px;transform-origin:0 0;">+12V</div>
<div class="t" style="top:94.48px;font-size:16.00px;color:#333;right:122.90px;transform-origin:100% 0;">11.712 V</div>
<div class="t" style="top:94.48px;font-size:16.00px;color:#333;right:86.40px;transform-origin:100% 0;">11.712 V</div>
<div class="t" style="top:94.48px;font-size:16.00px;color:#333;right:49.40px;transform-origin:100% 0;">11.736 V</div>
<div class="t" style="top:94.48px;font-size:16.00px;color:#333;right:12.60px;transform-origin:100% 0;">11.722 V</div>
<div class="abs" style="left:105.80px;top:99.85px;width:35.60px;height:6.82px;background:#cce4f7;"></div>
<svg class="abs" style="left:9.00px;top:100.46px" width="3" height="5.6" viewBox="0 0 6 11"><path d="M4 0 L0.5 6 L3 6 L1.5 11 L5.5 4.5 L3 4.5 L5 0Z" fill="#f0b418"/></svg>
<div class="t" style="top:101.23px;font-size:16.60px;color:#333;left:14.30px;transform-origin:0 0;">+5V</div>
<div class="t" style="top:101.30px;font-size:16.00px;color:#333;right:122.90px;transform-origin:100% 0;">4.820 V</div>
<div class="t" style="top:101.30px;font-size:16.00px;color:#333;right:86.40px;transform-origin:100% 0;">4.810 V</div>
<div class="t" style="top:101.30px;font-size:16.00px;color:#333;right:49.40px;transform-origin:100% 0;">4.830 V</div>
<div class="t" style="top:101.30px;font-size:16.00px;color:#333;right:12.60px;transform-origin:100% 0;">4.820 V</div>
<div class="abs" style="left:13.60px;top:106.67px;width:237.80px;height:6.82px;background:#f0f0f0;"></div>
<div class="abs" style="left:105.80px;top:106.67px;width:35.60px;height:6.82px;background:#cce4f7;"></div>
<svg class="abs" style="left:9.00px;top:107.28px" width="3" height="5.6" viewBox="0 0 6 11"><path d="M4 0 L0.5 6 L3 6 L1.5 11 L5.5 4.5 L3 4.5 L5 0Z" fill="#f0b418"/></svg>
<div class="t" style="top:108.05px;font-size:16.60px;color:#333;left:14.30px;transform-origin:0 0;">CPU NB/SoC</div>
<div class="t" style="top:108.12px;font-size:16.00px;color:#333;right:122.90px;transform-origin:100% 0;">1.216 V</div>
<div class="t" style="top:108.12px;font-size:16.00px;color:#333;right:86.40px;transform-origin:100% 0;">1.214 V</div>
<div class="t" style="top:108.12px;font-size:16.00px;color:#333;right:49.40px;transform-origin:100% 0;">1.216 V</div>
<div class="t" style="top:108.12px;font-size:16.00px;color:#333;right:12.60px;transform-origin:100% 0;">1.215 V</div>
<div class="abs" style="left:105.80px;top:113.49px;width:35.60px;height:6.82px;background:#cce4f7;"></div>
<svg class="abs" style="left:9.00px;top:114.10px" width="3" height="5.6" viewBox="0 0 6 11"><path d="M4 0 L0.5 6 L3 6 L1.5 11 L5.5 4.5 L3 4.5 L5 0Z" fill="#f0b418"/></svg>
<div class="t" style="top:114.87px;font-size:16.60px;color:#333;left:14.30px;transform-origin:0 0;">CPU VDDIO</div>
<div class="t" style="top:114.94px;font-size:16.00px;color:#333;right:122.90px;transform-origin:100% 0;">1.412 V</div>
<div class="t" style="top:114.94px;font-size:16.00px;color:#333;right:86.40px;transform-origin:100% 0;">1.408 V</div>
<div class="t" style="top:114.94px;font-size:16.00px;color:#333;right:49.40px;transform-origin:100% 0;">1.412 V</div>
<div class="t" style="top:114.94px;font-size:16.00px;color:#333;right:12.60px;transform-origin:100% 0;">1.410 V</div>
<div class="abs" style="left:13.60px;top:120.31px;width:237.80px;height:6.82px;background:#f0f0f0;"></div>
<div class="abs" style="left:105.80px;top:120.31px;width:35.60px;height:6.82px;background:#cce4f7;"></div>
<svg class="abs" style="left:9.00px;top:120.92px" width="3" height="5.6" viewBox="0 0 6 11"><path d="M4 0 L0.5 6 L3 6 L1.5 11 L5.5 4.5 L3 4.5 L5 0Z" fill="#f0b418"/></svg>
<div class="t" style="top:121.69px;font-size:16.60px;color:#333;left:14.30px;transform-origin:0 0;">Vcore</div>
<div class="t" style="top:121.76px;font-size:16.00px;color:#333;right:122.90px;transform-origin:100% 0;">0.990 V</div>
<div class="t" style="top:121.76px;font-size:16.00px;color:#333;right:86.40px;transform-origin:100% 0;">0.982 V</div>
<div class="t" style="top:121.76px;font-size:16.00px;color:#333;right:49.40px;transform-origin:100% 0;">0.992 V</div>
<div class="t" style="top:121.76px;font-size:16.00px;color:#333;right:12.60px;transform-origin:100% 0;">0.986 V</div>
<div class="abs" style="left:105.80px;top:127.13px;width:35.60px;height:6.82px;background:#cce4f7;"></div>
<svg class="abs" style="left:9.00px;top:127.74px" width="3" height="5.6" viewBox="0 0 6 11"><path d="M4 0 L0.5 6 L3 6 L1.5 11 L5.5 4.5 L3 4.5 L5 0Z" fill="#f0b418"/></svg>
<div class="t" style="top:128.51px;font-size:16.60px;color:#333;left:14.30px;transform-origin:0 0;">+3.3V</div>
<div class="t" style="top:128.58px;font-size:16.00px;color:#333;right:122.90px;transform-origin:100% 0;">3.052 V</div>
<div class="t" style="top:128.58px;font-size:16.00px;color:#333;right:86.40px;transform-origin:100% 0;">3.044 V</div>
<div class="t" style="top:128.58px;font-size:16.00px;color:#333;right:49.40px;transform-origin:100% 0;">3.064 V</div>
<div class="t" style="top:128.58px;font-size:16.00px;color:#333;right:12.60px;transform-origin:100% 0;">3.053 V</div>
<div class="abs" style="left:13.60px;top:133.95px;width:237.80px;height:6.82px;background:#f0f0f0;"></div>
<div class="abs" style="left:105.80px;top:133.95px;width:35.60px;height:6.82px;background:#cce4f7;"></div>
<svg class="abs" style="left:9.00px;top:134.56px" width="3" height="5.6" viewBox="0 0 6 11"><path d="M4 0 L0.5 6 L3 6 L1.5 11 L5.5 4.5 L3 4.5 L5 0Z" fill="#f0b418"/></svg>
<div class="t" style="top:135.33px;font-size:16.60px;color:#333;left:14.30px;transform-origin:0 0;">3VSB</div>
<div class="t" style="top:135.40px;font-size:16.00px;color:#333;right:122.90px;transform-origin:100% 0;">3.328 V</div>
<div class="t" style="top:135.40px;font-size:16.00px;color:#333;right:86.40px;transform-origin:100% 0;">3.328 V</div>
<div class="t" style="top:135.40px;font-size:16.00px;color:#333;right:49.40px;transform-origin:100% 0;">3.332 V</div>
<div class="t" style="top:135.40px;font-size:16.00px;color:#333;right:12.60px;transform-origin:100% 0;">3.328 V</div>
<svg class="abs" style="left:9.00px;top:141.38px" width="3" height="5.6" viewBox="0 0 6 11"><path d="M4 0 L0.5 6 L3 6 L1.5 11 L5.5 4.5 L3 4.5 L5 0Z" fill="#f0b418"/></svg>
<div class="t" style="top:142.15px;font-size:16.60px;color:#333;left:14.30px;transform-origin:0 0;">AVSB</div>
<div class="t" style="top:142.22px;font-size:16.00px;color:#333;right:122.90px;transform-origin:100% 0;">3.328 V</div>
<div class="t" style="top:142.22px;font-size:16.00px;color:#333;right:86.40px;transform-origin:100% 0;">3.328 V</div>
<div class="t" style="top:142.22px;font-size:16.00px;color:#333;right:49.40px;transform-origin:100% 0;">3.328 V</div>
<div class="t" style="top:142.22px;font-size:16.00px;color:#333;right:12.60px;transform-origin:100% 0;">3.328 V</div>
<div class="abs" style="left:13.60px;top:147.59px;width:237.80px;height:6.82px;background:#f0f0f0;"></div>
<svg class="abs" style="left:9.00px;top:148.20px" width="3" height="5.6" viewBox="0 0 6 11"><path d="M4 0 L0.5 6 L3 6 L1.5 11 L5.5 4.5 L3 4.5 L5 0Z" fill="#f0b418"/></svg>
<div class="t" style="top:148.97px;font-size:16.60px;color:#333;left:14.30px;transform-origin:0 0;">VTT</div>
<div class="t" style="top:149.04px;font-size:16.00px;color:#333;right:122.90px;transform-origin:100% 0;">2.044 V</div>
<div class="t" style="top:149.04px;font-size:16.00px;color:#333;right:86.40px;transform-origin:100% 0;">2.044 V</div>
<div class="t" style="top:149.04px;font-size:16.00px;color:#333;right:49.40px;transform-origin:100% 0;">2.044 V</div>
<div class="t" style="top:149.04px;font-size:16.00px;color:#333;right:12.60px;transform-origin:100% 0;">2.044 V</div>
<svg class="abs" style="left:9.00px;top:155.02px" width="3" height="5.6" viewBox="0 0 6 11"><path d="M4 0 L0.5 6 L3 6 L1.5 11 L5.5 4.5 L3 4.5 L5 0Z" fill="#f0b418"/></svg>
<div class="t" style="top:155.79px;font-size:16.60px;color:#333;left:14.30px;transform-origin:0 0;">VBAT</div>
<div class="t" style="top:155.86px;font-size:16.00px;color:#333;right:122.90px;transform-origin:100% 0;">3.188 V</div>
<div class="t" style="top:155.86px;font-size:16.00px;color:#333;right:86.40px;transform-origin:100% 0;">3.188 V</div>
<div class="t" style="top:155.86px;font-size:16.00px;color:#333;right:49.40px;transform-origin:100% 0;">3.188 V</div>
<div class="t" style="top:155.86px;font-size:16.00px;color:#333;right:12.60px;transform-origin:100% 0;">3.188 V</div>
<div class="abs" style="left:13.60px;top:161.23px;width:237.80px;height:6.82px;background:#f0f0f0;"></div>
<svg class="abs" style="left:9.00px;top:161.84px" width="3" height="5.6" viewBox="0 0 6 11"><path d="M4 0 L0.5 6 L3 6 L1.5 11 L5.5 4.5 L3 4.5 L5 0Z" fill="#f0b418"/></svg>
<div class="t" style="top:162.61px;font-size:16.60px;color:#333;left:14.30px;transform-origin:0 0;">VREF</div>
<div class="t" style="top:162.68px;font-size:16.00px;color:#333;right:122.90px;transform-origin:100% 0;">1.832 V</div>
<div class="t" style="top:162.68px;font-size:16.00px;color:#333;right:86.40px;transform-origin:100% 0;">1.832 V</div>
<div class="t" style="top:162.68px;font-size:16.00px;color:#333;right:49.40px;transform-origin:100% 0;">1.832 V</div>
<div class="t" style="top:162.68px;font-size:16.00px;color:#333;right:12.60px;transform-origin:100% 0;">1.832 V</div>
<div class="abs" style="left:105.80px;top:168.05px;width:35.60px;height:6.82px;background:#cce4f7;"></div>
<svg class="abs" style="left:7.80px;top:168.66px" width="5.6" height="5.6" viewBox="0 0 10 10"><path d="M3.2 0.5 H6.8 V3.2 H9.5 V6.8 H6.8 V9.5 H3.2 V6.8 H0.5 V3.2 H3.2Z" fill="#1a1a1a"/><circle cx="5" cy="5" r="1.5" fill="#fff"/></svg>
<div class="t" style="top:169.43px;font-size:16.60px;color:#333;left:14.30px;transform-origin:0 0;">CPU</div>
<div class="t" style="top:169.50px;font-size:16.00px;color:#333;right:122.90px;transform-origin:100% 0;">2,086 RPM</div>
<div class="t" style="top:169.50px;font-size:16.00px;color:#333;right:86.40px;transform-origin:100% 0;">2,079 RPM</div>
<div class="t" style="top:169.50px;font-size:16.00px;color:#333;right:49.40px;transform-origin:100% 0;">2,146 RPM</div>
<div class="t" style="top:169.50px;font-size:16.00px;color:#333;right:12.60px;transform-origin:100% 0;">2,112 RPM</div>
<div class="abs" style="left:13.60px;top:174.87px;width:237.80px;height:6.82px;background:#f0f0f0;"></div>
<div class="abs" style="left:105.80px;top:174.87px;width:35.60px;height:6.82px;background:#cce4f7;"></div>
<svg class="abs" style="left:7.80px;top:175.48px" width="5.6" height="5.6" viewBox="0 0 10 10"><path d="M3.2 0.5 H6.8 V3.2 H9.5 V6.8 H6.8 V9.5 H3.2 V6.8 H0.5 V3.2 H3.2Z" fill="#1a1a1a"/><circle cx="5" cy="5" r="1.5" fill="#fff"/></svg>
<div class="t" style="top:176.25px;font-size:16.60px;color:#333;left:14.30px;transform-origin:0 0;">PUMP SYS1</div>
<div class="t" style="top:176.32px;font-size:16.00px;color:#333;right:122.90px;transform-origin:100% 0;">3,100 RPM</div>
<div class="t" style="top:176.32px;font-size:16.00px;color:#333;right:86.40px;transform-origin:100% 0;">3,007 RPM</div>
<div class="t" style="top:176.32px;font-size:16.00px;color:#333;right:49.40px;transform-origin:100% 0;">3,116 RPM</div>
<div class="t" style="top:176.32px;font-size:16.00px;color:#333;right:12.60px;transform-origin:100% 0;">3,077 RPM</div>
<div class="abs" style="left:13.60px;top:188.51px;width:237.80px;height:6.82px;background:#dcdcdc;"></div>
<svg class="abs" style="left:3.80px;top:190.72px" width="3.2" height="2.4" viewBox="0 0 6 4"><path d="M0.5 0.5 L3 3 L5.5 0.5" stroke="#555" stroke-width="0.7" fill="none"/></svg>
<div class="abs" style="left:9.80px;top:189.62px;width:2.4px;height:4.6px;background:#333;border-radius:0.3px"></div>
<div class="t" style="top:189.81px;font-size:17.20px;color:#111;left:14.30px;transform-origin:0 0;font-weight:bold;">MSI MAG B850M MORTAR WIFI (MS-7E61) (AMD 芯片组)</div>
<svg class="abs" style="left:9.40px;top:196.14px" width="2.6" height="5.2" viewBox="0 0 6 11"><rect x="2" y="0" width="2" height="8" fill="#bbb"/><rect x="2" y="3" width="2" height="6" fill="#d42020"/><circle cx="3" cy="9" r="2" fill="#d42020"/></svg>
<div class="t" style="top:196.71px;font-size:16.60px;color:#333;left:14.30px;transform-origin:0 0;">芯片组 1 (aHCI)</div>
<div class="t" style="top:196.78px;font-size:16.00px;color:#333;right:122.90px;transform-origin:100% 0;">59.2 °C</div>
<div class="t" style="top:196.78px;font-size:16.00px;color:#333;right:86.40px;transform-origin:100% 0;">59.2 °C</div>
<div class="t" style="top:196.78px;font-size:16.00px;color:#333;right:49.40px;transform-origin:100% 0;">59.2 °C</div>
<div class="t" style="top:196.78px;font-size:16.00px;color:#333;right:12.60px;transform-origin:100% 0;">59.2 °C</div>
<div class="abs" style="left:13.60px;top:202.15px;width:237.80px;height:6.82px;background:#f0f0f0;"></div>
<div class="abs" style="left:13.60px;top:208.97px;width:237.80px;height:6.82px;background:#dcdcdc;"></div>
<svg class="abs" style="left:3.80px;top:211.18px" width="3.2" height="2.4" viewBox="0 0 6 4"><path d="M0.5 0.5 L3 3 L5.5 0.5" stroke="#555" stroke-width="0.7" fill="none"/></svg>
<div class="abs" style="left:9.80px;top:210.08px;width:2.4px;height:4.6px;background:#333;border-radius:0.3px"></div>
<div class="abs" style="left:252.30px;top:10.00px;width:10.00px;height:202.00px;background:#fafafa;"></div>
<div class="abs" style="left:258.60px;top:77.00px;width:0.90px;height:24.00px;background:#8a8a8a;"></div>
<div class="abs" style="left:0.00px;top:212.00px;width:263.20px;height:19.60px;background:#f0f0f0;border-top:0.5px solid #e0e0e0"></div>
<div class="abs" style="left:0.80px;top:216.00px;width:14.00px;height:12.00px;background:#fff;border-radius:1px"></div>
<div class="abs" style="left:16.80px;top:216.00px;width:12.40px;height:12.00px;background:#f6f6f6;border-radius:1px"></div>
<svg class="abs" style="left:2.4px;top:217.6px" width="11" height="6" viewBox="0 0 22 12"><path d="M0 6 L6.5 0 V3.4 H15.5 V0 L22 6 L15.5 12 V8.6 H6.5 V12Z" fill="#1f74d8"/></svg>
<svg class="abs" style="left:18.2px;top:217.6px" width="10.6" height="6" viewBox="0 0 22 12"><path d="M10.4 6 L4.8 0.5 V3.6 H0 V8.4 H4.8 V11.5Z M11.6 6 L17.2 0.5 V3.6 H22 V8.4 H17.2 V11.5Z" fill="#8cc4f0"/></svg>
<div class="abs" style="left:148.80px;top:216.00px;width:14.00px;height:12.00px;background:#fafafa;border-radius:1px"></div>
<svg class="abs" style="left:150.6px;top:216.6px" width="9.4" height="9" viewBox="0 0 19 18"><rect x="0.5" y="0.5" width="9" height="6.5" rx="0.8" fill="#2a78d0"/><rect x="1.8" y="1.6" width="6.4" height="3.8" fill="#bfe0ff"/><rect x="9" y="10" width="9" height="6.5" rx="0.8" fill="#2a78d0"/><rect x="10.3" y="11.1" width="6.4" height="3.8" fill="#bfe0ff"/><path d="M5 7 V11 H9" stroke="#333" stroke-width="1.2" fill="none"/><rect x="3" y="7.2" width="4" height="1.2" fill="#555"/><rect x="11.5" y="16.6" width="4" height="1.2" fill="#555"/></svg>
<div class="t" style="top:220.09px;font-size:15.60px;color:#333;right:68.90px;transform-origin:100% 0;">0:00:22</div>
<div class="abs" style="left:194.80px;top:216.00px;width:13.00px;height:12.00px;background:#fafafa;border-radius:1px"></div>
<svg class="abs" style="left:195.6px;top:216.4px" width="10.6" height="10.6" viewBox="0 0 20 20"><circle cx="10" cy="10" r="9" fill="#fff" stroke="#222" stroke-width="1.2"/><path d="M10 1.5V3.2M10 16.8V18.5M1.5 10H3.2M16.8 10H18.5M4 4L5.1 5.1M16 4L14.9 5.1M4 16L5.1 14.9M16 16L14.9 14.9" stroke="#222" stroke-width="0.9"/><path d="M10 4.5 V10 H14.5" stroke="#111" stroke-width="1.4" fill="none"/></svg>
<div class="abs" style="left:210.80px;top:216.00px;width:14.00px;height:12.00px;background:#f4f4f4;border-radius:1px"></div>
<svg class="abs" style="left:212.8px;top:216.4px" width="10" height="10.4" viewBox="0 0 19 20"><path d="M2 0.5 H11.5 L15.5 4.5 V19.5 H2Z" fill="#f2f2f2" stroke="#9a9a9a" stroke-width="0.9"/><path d="M11.5 0.5 V4.5 H15.5" fill="#ddd" stroke="#9a9a9a" stroke-width="0.8"/><path d="M4 7H13M4 10H13M4 13H10" stroke="#c8c8c8" stroke-width="0.8"/><circle cx="14.5" cy="15.5" r="4" fill="#5cbf4a"/><path d="M12.5 15.5 H16.5 M14.8 13.6 L16.6 15.5 L14.8 17.4" stroke="#fff" stroke-width="1" fill="none"/></svg>
<div class="abs" style="left:227.80px;top:216.00px;width:13.50px;height:12.00px;background:#f4f4f4;border-radius:1px"></div>
<svg class="abs" style="left:228.6px;top:216.3px" width="11" height="11" viewBox="0 0 20 20"><path d="M10 0.8 L12 3.2 L15.6 2.4 L16 6 L19.2 8.2 L17 11 L17.8 14.6 L14.2 15 L12.4 18.4 L10 16.4 L7.6 18.4 L5.8 15 L2.2 14.6 L3 11 L0.8 8.2 L4 6 L4.4 2.4 L8 3.2Z" fill="#cfcfcf" stroke="#6a6a6a" stroke-width="1"/><circle cx="10" cy="9.6" r="4" fill="#f4f4f4" stroke="#7a7a7a" stroke-width="1"/></svg>
<div class="abs" style="left:242.80px;top:215.50px;width:15.50px;height:13.00px;background:#eef5fc;border:0.6px solid #6aa6e0;border-radius:1px"></div>
<svg class="abs" style="left:246px;top:217.6px" width="8.6" height="8.6" viewBox="0 0 16 16"><path d="M2.5 2.5 L13.5 13.5 M13.5 2.5 L2.5 13.5" stroke="#1a6fd0" stroke-width="3.8" stroke-linecap="round"/><path d="M2.5 2.5 L13.5 13.5 M13.5 2.5 L2.5 13.5" stroke="#3a90e8" stroke-width="1.6" stroke-linecap="round"/></svg>
</div>
<div class="abs" style="left:0;top:0;width:263.2px;height:231.6px;border-radius:3px;border:0.7px solid #8a3a5a;pointer-events:none"></div>
</div>
</body></html>
